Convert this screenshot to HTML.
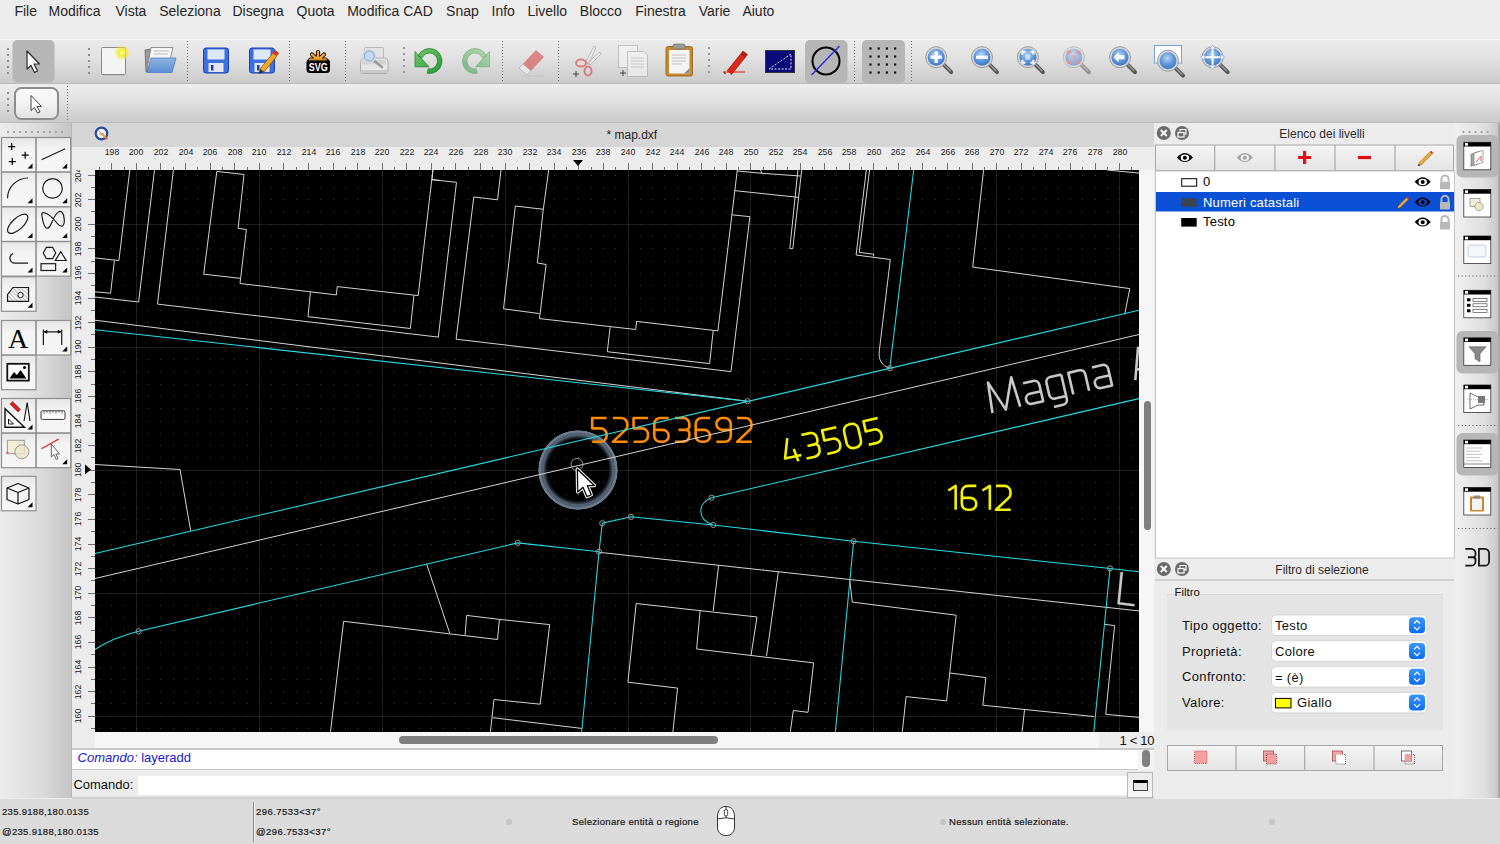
<!DOCTYPE html>
<html><head><meta charset="utf-8">
<style>
*{margin:0;padding:0;box-sizing:border-box}
html,body{width:1500px;height:844px;overflow:hidden;background:#ececec;font-family:"Liberation Sans",sans-serif;position:relative}
.a{position:absolute}
.t{position:absolute;white-space:nowrap;line-height:1}
</style></head><body>
<div class="a" style="left:0;top:0;width:1500px;height:39px;background:#ececec"></div>
<div class="t" style="left:14.4px;top:3.5px;font-size:14px;color:#262626;">File</div>
<div class="t" style="left:48.5px;top:3.5px;font-size:14px;color:#262626;">Modifica</div>
<div class="t" style="left:115.5px;top:3.5px;font-size:14px;color:#262626;">Vista</div>
<div class="t" style="left:159.2px;top:3.5px;font-size:14px;color:#262626;">Seleziona</div>
<div class="t" style="left:232.5px;top:3.5px;font-size:14px;color:#262626;">Disegna</div>
<div class="t" style="left:296.5px;top:3.5px;font-size:14px;color:#262626;">Quota</div>
<div class="t" style="left:347.2px;top:3.5px;font-size:14px;color:#262626;">Modifica CAD</div>
<div class="t" style="left:446.1px;top:3.5px;font-size:14px;color:#262626;">Snap</div>
<div class="t" style="left:491.5px;top:3.5px;font-size:14px;color:#262626;">Info</div>
<div class="t" style="left:527.4px;top:3.5px;font-size:14px;color:#262626;">Livello</div>
<div class="t" style="left:579.8px;top:3.5px;font-size:14px;color:#262626;">Blocco</div>
<div class="t" style="left:635.3px;top:3.5px;font-size:14px;color:#262626;">Finestra</div>
<div class="t" style="left:698.7px;top:3.5px;font-size:14px;color:#262626;">Varie</div>
<div class="t" style="left:742.4px;top:3.5px;font-size:14px;color:#262626;">Aiuto</div>
<div class="a" style="left:0;top:39px;width:1500px;height:45px;background:linear-gradient(#f4f4f4 0,#f4f4f4 1px,#ebebeb 1px,#e2e2e2 40%,#cbcbcb 97%,#b9b9b9 97%)"></div>
<div class="a" style="left:0;top:84px;width:1500px;height:39px;background:linear-gradient(#ededed,#e2e2e2 40%,#cacaca 97%,#bcbcbc 97%)"></div>
<svg class="a" style="left:0;top:0" width="1300" height="125">
<defs><radialGradient id="gblue" cx="45%" cy="35%" r="65%"><stop offset="0" stop-color="#b8d4f4"/><stop offset="0.6" stop-color="#5e96dc"/><stop offset="1" stop-color="#3f78c4"/></radialGradient><radialGradient id="gglow" cx="50%" cy="50%" r="50%"><stop offset="0" stop-color="#fffff0"/><stop offset="0.35" stop-color="#f4ee30"/><stop offset="1" stop-color="#f0e800" stop-opacity="0"/></radialGradient><linearGradient id="gfold" x1="0" y1="0" x2="0" y2="1"><stop offset="0" stop-color="#8fb4e2"/><stop offset="1" stop-color="#5a8fd2"/></linearGradient><linearGradient id="gbtn" x1="0" y1="0" x2="0" y2="1"><stop offset="0" stop-color="#fbfbfb"/><stop offset="0.5" stop-color="#f2f2f2"/><stop offset="1" stop-color="#e2e2e2"/></linearGradient></defs>
<rect x="7.0" y="48.0" width="2" height="2" fill="#8c8c8c"/><rect x="7.0" y="54.0" width="2" height="2" fill="#8c8c8c"/><rect x="7.0" y="60.0" width="2" height="2" fill="#8c8c8c"/><rect x="7.0" y="66.0" width="2" height="2" fill="#8c8c8c"/><rect x="7.0" y="72.0" width="2" height="2" fill="#8c8c8c"/>
<rect x="12.5" y="40" width="42" height="42.5" rx="5" fill="#b6b6b6"/>
<path d="M27 51 L27 69 L31 65.5 L34.5 72.5 L37.5 71 L34 64 L39.5 64 Z" fill="#fff" stroke="#2a2a2a" stroke-width="1.2" stroke-linejoin="round"/>
<rect x="88.0" y="48.0" width="2" height="2" fill="#8c8c8c"/><rect x="88.0" y="54.0" width="2" height="2" fill="#8c8c8c"/><rect x="88.0" y="60.0" width="2" height="2" fill="#8c8c8c"/><rect x="88.0" y="66.0" width="2" height="2" fill="#8c8c8c"/><rect x="88.0" y="72.0" width="2" height="2" fill="#8c8c8c"/>
<rect x="101.5" y="47.5" width="24" height="27" rx="1" fill="#f4f4f4" stroke="#8a8a8a" stroke-width="1"/>
<line x1="102" y1="75.5" x2="125" y2="75.5" stroke="#c0c0c0"/>
<circle cx="122" cy="52.6" r="8" fill="url(#gglow)"/>
<path d="M145 50 L151 49 L149 71 L146 72 Z" fill="#9a9a9a" stroke="#666" stroke-width="0.8"/>
<path d="M151 47.5 L173 47.5 L170 60 L147 70 Z" fill="#f6f6f6" stroke="#7a7a7a" stroke-width="0.8"/>
<path d="M154 51 H169 M153.5 54 H168" stroke="#bbb" stroke-width="1.2"/>
<path d="M151 58 L176 58 L172 72.5 L147 72.5 Z" fill="url(#gfold)" stroke="#4a7bbf" stroke-width="0.8"/>
<line x1="187.5" y1="41" x2="187.5" y2="81" stroke="#707070" stroke-width="1" stroke-dasharray="1 2"/>
<rect x="203.5" y="48.0" width="25" height="25" rx="2.5" fill="#3c6fe0" stroke="#1d3fb0" stroke-width="1"/><rect x="207.5" y="49.5" width="17" height="10" fill="#dfe8f8"/><rect x="208.5" y="63.0" width="15" height="9" fill="#e4e4ee"/><rect x="211.0" y="65.0" width="2.5" height="5.5" fill="#1d3fb0"/>
<rect x="249.5" y="48.0" width="25" height="25" rx="2.5" fill="#3c6fe0" stroke="#1d3fb0" stroke-width="1"/><rect x="253.5" y="49.5" width="17" height="10" fill="#dfe8f8"/><rect x="254.5" y="63.0" width="15" height="9" fill="#e4e4ee"/><rect x="257.0" y="65.0" width="2.5" height="5.5" fill="#1d3fb0"/>
<path d="M260 69 L273 53 L277 56 L264 72 Z" fill="#f5a623" stroke="#8a5a10" stroke-width="0.8"/><path d="M273 53 L275.5 50 L279 53 L277 56 Z" fill="#e03020"/><path d="M260 69 L258.5 74 L264 72 Z" fill="#333"/>
<line x1="289.5" y1="41" x2="289.5" y2="81" stroke="#707070" stroke-width="1" stroke-dasharray="1 2"/>
<path d="M318 60 V52 M318 60 L312 54.5 M318 60 L324 54.5 M318 60 L310.5 59.5 M318 60 L325.5 59.5" stroke="#000" stroke-width="4.2" stroke-linecap="round"/>
<path d="M318 60 V52 M318 60 L312 54.5 M318 60 L324 54.5 M318 60 L310.5 59.5 M318 60 L325.5 59.5" stroke="#f7a22e" stroke-width="2.4" stroke-linecap="round"/>
<rect x="306.5" y="59" width="23.5" height="14" rx="3.5" fill="#000"/><rect x="309" y="59.2" width="18" height="1.2" fill="#f7a22e"/>
<text x="318.2" y="71.2" text-anchor="middle" font-family="Liberation Sans" font-weight="bold" font-size="11.5" fill="#fff" textLength="19" lengthAdjust="spacingAndGlyphs">SVG</text>
<line x1="345.5" y1="41" x2="345.5" y2="81" stroke="#707070" stroke-width="1" stroke-dasharray="1 2"/>
<rect x="364.5" y="47.5" width="19" height="13" rx="1" fill="#e4e4e4" stroke="#b0b0b0" stroke-width="0.8"/>
<path d="M360.5 62 Q360.5 58 364 58 H384.5 Q388 58 388 62 V71 Q388 73.5 385 73.5 H363.5 Q360.5 73.5 360.5 71 Z" fill="#e6e6e6" stroke="#a0a0a0" stroke-width="0.8"/>
<rect x="362" y="60" width="24" height="4.5" rx="1" fill="#d2d2d2"/><rect x="361" y="70" width="26.5" height="3" fill="#c8c8c8"/>
<line x1="373" y1="60" x2="382" y2="67" stroke="#9a9a9a" stroke-width="2.6" stroke-linecap="round"/>
<circle cx="369.3" cy="56" r="6.3" fill="#c4d8f0" stroke="#d8d8d8" stroke-width="1.6"/><circle cx="369.3" cy="56" r="5" fill="none" stroke="#6a9ad8" stroke-width="0.8"/>
<rect x="403.0" y="47.0" width="2" height="2" fill="#999"/><rect x="403.0" y="53.0" width="2" height="2" fill="#999"/><rect x="403.0" y="59.0" width="2" height="2" fill="#999"/><rect x="403.0" y="65.0" width="2" height="2" fill="#999"/><rect x="403.0" y="71.0" width="2" height="2" fill="#999"/>
<defs><linearGradient id="gund" x1="0" y1="0" x2="1" y2="1"><stop offset="0" stop-color="#7cc870"/><stop offset="1" stop-color="#1e9a30"/></linearGradient></defs>
<path d="M418.17 55.72 A12.5 12.5 0 1 1 427.33 73.31 L428.11 68.88 A8 8 0 1 0 422.25 57.62 Z M415 51.5 L415 66.8 L429 66.8 Z" fill="url(#gund)" stroke="#1a7a28" stroke-width="0.7" stroke-linejoin="round"/>
<g opacity="0.5" transform="translate(904.5 0) scale(-1 1)"><path d="M418.17 55.72 A12.5 12.5 0 1 1 427.33 73.31 L428.11 68.88 A8 8 0 1 0 422.25 57.62 Z M415 51.5 L415 66.8 L429 66.8 Z" fill="url(#gund)" stroke="#1a7a28" stroke-width="0.7" stroke-linejoin="round"/></g>
<line x1="502.5" y1="41" x2="502.5" y2="81" stroke="#707070" stroke-width="1" stroke-dasharray="1 2"/>
<g opacity="0.6"><path d="M519 68 L536 50 L544 57 L527 75 Z" fill="#d84a4a"/><path d="M519 68 L523 64 L531 71 L527 75 Z" fill="#f2f2f2" stroke="#999" stroke-width="0.6"/><path d="M522 76 H544" stroke="#bbb" stroke-width="1"/></g>
<line x1="558.5" y1="41" x2="558.5" y2="81" stroke="#707070" stroke-width="1" stroke-dasharray="1 2"/>
<g opacity="0.65"><path d="M586 62 L594 46 L596 47 L589 64 Z M587 63 L600 52 L601 54 L590 65 Z" fill="#eee" stroke="#888" stroke-width="0.7"/><ellipse cx="581" cy="63" rx="5" ry="3.5" fill="none" stroke="#d84a4a" stroke-width="2"/><ellipse cx="588" cy="71" rx="3.5" ry="4.5" fill="none" stroke="#d84a4a" stroke-width="2"/></g>
<path d="M573 74 H579 M576 71 V77" stroke="#444" stroke-width="1"/>
<g opacity="0.6"><rect x="618.5" y="45.5" width="19" height="22" fill="#f6f6f6" stroke="#999" stroke-width="0.8"/><path d="M627.5 51.5 H644 L647.5 55 V76.5 H627.5 Z" fill="#f6f6f6" stroke="#999" stroke-width="0.8"/><path d="M631 58 H644 M631 61 H644 M631 64 H644 M631 67 H644" stroke="#bbb"/></g>
<path d="M620 73 H626 M623 70 V76" stroke="#444" stroke-width="1"/>
<rect x="666" y="46.5" width="26.5" height="29.5" rx="2" fill="#c48a2c" stroke="#8a5a18" stroke-width="0.8"/>
<rect x="669" y="50" width="20.5" height="23.5" fill="#f4f4f4"/>
<path d="M672 55 H686 M672 58 H686 M672 61 H686 M672 64 H682" stroke="#c0c0c0"/>
<rect x="673" y="44" width="12" height="5" rx="1.5" fill="#9a9a9a" stroke="#666" stroke-width="0.6"/>
<path d="M684 73.5 L689.5 68 V73.5 Z" fill="#888"/>
<rect x="708.0" y="47.0" width="2" height="2" fill="#999"/><rect x="708.0" y="53.0" width="2" height="2" fill="#999"/><rect x="708.0" y="59.0" width="2" height="2" fill="#999"/><rect x="708.0" y="65.0" width="2" height="2" fill="#999"/><rect x="708.0" y="71.0" width="2" height="2" fill="#999"/>
<path d="M727 71 L741 53.5 L745.5 57 L731.5 74.5 Z" fill="#e0281a" stroke="#8a1a10" stroke-width="0.7"/><path d="M741 53.5 L743 51 L747.5 54.5 L745.5 57 Z" fill="#c02010" stroke="#8a1a10" stroke-width="0.6"/><path d="M727 71 L724 73 L731.5 74.5 Z" fill="#f0d8b0"/><path d="M724 72.4 L725.5 73.8" stroke="#222" stroke-width="1.2"/><line x1="723" y1="72" x2="745" y2="72" stroke="#e01010" stroke-width="1"/>
<rect x="765.5" y="50.5" width="29" height="22" fill="#0a0a7a" stroke="#333" stroke-width="1"/>
<path d="M769 69 L791 54 V69 Z" fill="none" stroke="#e8e8ff" stroke-width="1" stroke-dasharray="2 1.5"/>
<rect x="805" y="40" width="42.5" height="43" rx="5" fill="#b6b6b6"/>
<circle cx="826" cy="61" r="13.5" fill="none" stroke="#000" stroke-width="2"/>
<line x1="811.5" y1="75" x2="839.5" y2="46" stroke="#2020f0" stroke-width="1.2"/>
<line x1="854.5" y1="41" x2="854.5" y2="81" stroke="#707070" stroke-width="1" stroke-dasharray="1 2"/>
<rect x="862" y="40" width="43" height="43" rx="5" fill="#b6b6b6"/>
<rect x="869.4" y="47.4" width="2.2" height="2.2" fill="#111"/><rect x="869.4" y="55.4" width="2.2" height="2.2" fill="#111"/><rect x="869.4" y="63.4" width="2.2" height="2.2" fill="#111"/><rect x="869.4" y="71.4" width="2.2" height="2.2" fill="#111"/><rect x="877.6" y="47.4" width="2.2" height="2.2" fill="#111"/><rect x="877.6" y="55.4" width="2.2" height="2.2" fill="#111"/><rect x="877.6" y="63.4" width="2.2" height="2.2" fill="#111"/><rect x="877.6" y="71.4" width="2.2" height="2.2" fill="#111"/><rect x="885.8" y="47.4" width="2.2" height="2.2" fill="#111"/><rect x="885.8" y="55.4" width="2.2" height="2.2" fill="#111"/><rect x="885.8" y="63.4" width="2.2" height="2.2" fill="#111"/><rect x="885.8" y="71.4" width="2.2" height="2.2" fill="#111"/><rect x="894.0" y="47.4" width="2.2" height="2.2" fill="#111"/><rect x="894.0" y="55.4" width="2.2" height="2.2" fill="#111"/><rect x="894.0" y="63.4" width="2.2" height="2.2" fill="#111"/><rect x="894.0" y="71.4" width="2.2" height="2.2" fill="#111"/>
<line x1="911.5" y1="41" x2="911.5" y2="81" stroke="#707070" stroke-width="1" stroke-dasharray="1 2"/>
<g><line x1="943.2" y1="64.2" x2="951.2" y2="72.2" stroke="#555" stroke-width="4" stroke-linecap="round"/><line x1="944.2" y1="64.7" x2="950.2" y2="70.7" stroke="#999" stroke-width="1.5" stroke-linecap="round"/><circle cx="936.2" cy="57.2" r="10.5" fill="#d8d8d8" stroke="#9a9a9a" stroke-width="1"/><circle cx="936.2" cy="57.2" r="8.5" fill="url(#gblue)"/><path d="M936.2 51.5 V63 M930.5 57.2 H942" stroke="#fff" stroke-width="3.2"/></g>
<g><line x1="989.0" y1="64.2" x2="997.0" y2="72.2" stroke="#555" stroke-width="4" stroke-linecap="round"/><line x1="990.0" y1="64.7" x2="996.0" y2="70.7" stroke="#999" stroke-width="1.5" stroke-linecap="round"/><circle cx="982.0" cy="57.2" r="10.5" fill="#d8d8d8" stroke="#9a9a9a" stroke-width="1"/><circle cx="982.0" cy="57.2" r="8.5" fill="url(#gblue)"/><path d="M976 57.2 H988" stroke="#fff" stroke-width="3.2"/></g>
<g><line x1="1034.9" y1="64.2" x2="1042.9" y2="72.2" stroke="#555" stroke-width="4" stroke-linecap="round"/><line x1="1035.9" y1="64.7" x2="1041.9" y2="70.7" stroke="#999" stroke-width="1.5" stroke-linecap="round"/><circle cx="1027.9" cy="57.2" r="10.5" fill="#d8d8d8" stroke="#9a9a9a" stroke-width="1"/><circle cx="1027.9" cy="57.2" r="8.5" fill="url(#gblue)"/><path d="M1022.4000000000001 54.7 v-3 h3 M1033.4 54.7 v-3 h-3 M1022.4000000000001 59.7 v3 h3 M1033.4 59.7 v3 h-3" stroke="#fff" stroke-width="2" fill="none"/><rect x="1025.4" y="54.7" width="5" height="5" fill="#fff" opacity="0.5"/></g>
<g opacity="0.55"><line x1="1080.8" y1="64.2" x2="1088.8" y2="72.2" stroke="#555" stroke-width="4" stroke-linecap="round"/><line x1="1081.8" y1="64.7" x2="1087.8" y2="70.7" stroke="#999" stroke-width="1.5" stroke-linecap="round"/><circle cx="1073.8" cy="57.2" r="10.5" fill="#d8d8d8" stroke="#9a9a9a" stroke-width="1"/><circle cx="1073.8" cy="57.2" r="8.5" fill="url(#gblue)"/><path d="M1068.3 54.7 v-3 h3 M1079.3 54.7 v-3 h-3 M1068.3 59.7 v3 h3 M1079.3 59.7 v3 h-3" stroke="#e85050" stroke-width="2" fill="none"/><rect x="1071.3" y="54.7" width="5" height="5" fill="#e85050" opacity="0.5"/></g>
<g><line x1="1127.0" y1="64.2" x2="1135.0" y2="72.2" stroke="#555" stroke-width="4" stroke-linecap="round"/><line x1="1128.0" y1="64.7" x2="1134.0" y2="70.7" stroke="#999" stroke-width="1.5" stroke-linecap="round"/><circle cx="1120.0" cy="57.2" r="10.5" fill="#d8d8d8" stroke="#9a9a9a" stroke-width="1"/><circle cx="1120.0" cy="57.2" r="8.5" fill="url(#gblue)"/><path d="M1113.5 57.2 l5 -5 v3 h6 v4 h-6 v3 Z" fill="#fff"/></g>
<rect x="1154.5" y="45.5" width="27" height="17.5" fill="#fff" stroke="#7aa0d8" stroke-width="1"/>
<g><line x1="1175.0" y1="67.7" x2="1183.0" y2="75.7" stroke="#555" stroke-width="4" stroke-linecap="round"/><line x1="1176.0" y1="68.2" x2="1182.0" y2="74.2" stroke="#999" stroke-width="1.5" stroke-linecap="round"/><circle cx="1168.0" cy="60.7" r="10.5" fill="#d8d8d8" stroke="#9a9a9a" stroke-width="1"/><circle cx="1168.0" cy="60.7" r="8.5" fill="url(#gblue)"/></g>
<g><line x1="1219.6" y1="64.2" x2="1227.6" y2="72.2" stroke="#555" stroke-width="4" stroke-linecap="round"/><line x1="1220.6" y1="64.7" x2="1226.6" y2="70.7" stroke="#999" stroke-width="1.5" stroke-linecap="round"/><circle cx="1212.6" cy="57.2" r="10.5" fill="#d8d8d8" stroke="#9a9a9a" stroke-width="1"/><circle cx="1212.6" cy="57.2" r="8.5" fill="url(#gblue)"/><path d="M1212.6 49.2 V65.2 M1204.6 57.2 H1220.6" stroke="#fff" stroke-width="2"/><path d="M1212.6 45.2 l-3 4 h6 Z M1212.6 69.2 l-3 -4 h6 Z M1200.6 57.2 l4 -3 v6 Z M1224.6 57.2 l-4 -3 v6 Z" fill="#fff" stroke="#6a9ae0" stroke-width="0.6"/></g>
<rect x="7.0" y="92.0" width="2" height="2" fill="#8c8c8c"/><rect x="7.0" y="98.0" width="2" height="2" fill="#8c8c8c"/><rect x="7.0" y="104.0" width="2" height="2" fill="#8c8c8c"/><rect x="7.0" y="110.0" width="2" height="2" fill="#8c8c8c"/>
<rect x="15" y="88" width="43" height="31" rx="6.5" fill="url(#gbtn)" stroke="#8c8c8c" stroke-width="2"/>
<path d="M31 95.5 L31 110.5 L34.5 107.5 L37.5 113 L40 112 L37 106.5 L41.5 106.5 Z" fill="#fff" stroke="#444" stroke-width="1" stroke-linejoin="round"/>
<line x1="67.5" y1="86" x2="67.5" y2="121" stroke="#707070" stroke-width="1" stroke-dasharray="1 2"/>
</svg>
<div class="a" style="left:0;top:123px;width:72px;height:675px;background:linear-gradient(90deg,#ececec,#dadada 60%,#c4c4c4);border-right:1px solid #b8b8b8"></div>
<div class="a" style="left:72px;top:123px;width:1082px;height:24px;background:#d5d5d5"></div>
<div class="t" style="left:606.5px;top:128.7px;font-size:12px;color:#1e1e1e;">* map.dxf</div>
<svg class="a" style="left:94px;top:126px" width="16" height="16"><circle cx="7.5" cy="7.5" r="5.8" fill="#eef0f4" stroke="#2a4a9a" stroke-width="2.2"/><path d="M5 5 L8 8 M5 8 H10" stroke="#c04040" stroke-width="0.6"/><path d="M7.5 7.5 L12 12" stroke="#e8a020" stroke-width="2"/><circle cx="12.5" cy="12.5" r="1.2" fill="#e06060"/></svg>
<div class="a" style="left:72px;top:147px;width:1082px;height:601px;background:#ececec"></div>
<div class="a" style="left:95px;top:732px;width:1004px;height:16px;background:#f6f6f6"></div>
<div class="a" style="left:1139px;top:170px;width:15px;height:562px;background:#f6f6f6"></div>
<div class="a" style="left:1154px;top:123px;width:301px;height:675px;background:#ececec"></div>
<div class="a" style="left:1455px;top:123px;width:45px;height:675px;background:linear-gradient(90deg,#f0f0f0,#dedede 70%,#c8c8c8);border-right:2px solid #a8a8a8"></div>
<div class="a" style="left:0;top:799px;width:1500px;height:45px;background:#dbdbdb"></div><svg width="1500" height="844" style="position:absolute;left:0;top:0">
<defs><clipPath id="cv"><rect x="95" y="170" width="1044" height="562"/></clipPath>
<radialGradient id="ring" gradientUnits="userSpaceOnUse" cx="578" cy="470" r="40"><stop offset="0.76" stop-color="#3c4a58" stop-opacity="0"/><stop offset="0.83" stop-color="#4a5868" stop-opacity="0.6"/><stop offset="0.87" stop-color="#5f6e7e" stop-opacity="0.9"/><stop offset="0.91" stop-color="#56657a" stop-opacity="0.9"/><stop offset="0.95" stop-color="#6e7e8e" stop-opacity="1"/><stop offset="0.985" stop-color="#6a7a8a" stop-opacity="1"/><stop offset="1" stop-color="#506070" stop-opacity="0"/></radialGradient>
</defs>
<g clip-path="url(#cv)">
<rect x="95" y="170" width="1044" height="562" fill="#000"/>
<path d="M136.5 170V732M259.5 170V732M382.5 170V732M505.5 170V732M628.5 170V732M750.5 170V732M873.5 170V732M996.5 170V732M1119.5 170V732M95 224.5H1139M95 347.5H1139M95 470.5H1139M95 593.5H1139M95 716.5H1139" stroke="#1d1d1d" stroke-width="1" fill="none"/>
<path d="M99 728h1v1h-1zM99 716h1v1h-1zM99 703h1v1h-1zM99 691h1v1h-1zM99 679h1v1h-1zM99 667h1v1h-1zM99 654h1v1h-1zM99 642h1v1h-1zM99 630h1v1h-1zM99 617h1v1h-1zM99 605h1v1h-1zM99 593h1v1h-1zM99 580h1v1h-1zM99 568h1v1h-1zM99 556h1v1h-1zM99 544h1v1h-1zM99 531h1v1h-1zM99 519h1v1h-1zM99 507h1v1h-1zM99 494h1v1h-1zM99 482h1v1h-1zM99 470h1v1h-1zM99 457h1v1h-1zM99 445h1v1h-1zM99 433h1v1h-1zM99 421h1v1h-1zM99 408h1v1h-1zM99 396h1v1h-1zM99 384h1v1h-1zM99 371h1v1h-1zM99 359h1v1h-1zM99 347h1v1h-1zM99 334h1v1h-1zM99 322h1v1h-1zM99 310h1v1h-1zM99 298h1v1h-1zM99 285h1v1h-1zM99 273h1v1h-1zM99 261h1v1h-1zM99 248h1v1h-1zM99 236h1v1h-1zM99 224h1v1h-1zM99 211h1v1h-1zM99 199h1v1h-1zM99 187h1v1h-1zM99 175h1v1h-1zM111 728h1v1h-1zM111 716h1v1h-1zM111 703h1v1h-1zM111 691h1v1h-1zM111 679h1v1h-1zM111 667h1v1h-1zM111 654h1v1h-1zM111 642h1v1h-1zM111 630h1v1h-1zM111 617h1v1h-1zM111 605h1v1h-1zM111 593h1v1h-1zM111 580h1v1h-1zM111 568h1v1h-1zM111 556h1v1h-1zM111 544h1v1h-1zM111 531h1v1h-1zM111 519h1v1h-1zM111 507h1v1h-1zM111 494h1v1h-1zM111 482h1v1h-1zM111 470h1v1h-1zM111 457h1v1h-1zM111 445h1v1h-1zM111 433h1v1h-1zM111 421h1v1h-1zM111 408h1v1h-1zM111 396h1v1h-1zM111 384h1v1h-1zM111 371h1v1h-1zM111 359h1v1h-1zM111 347h1v1h-1zM111 334h1v1h-1zM111 322h1v1h-1zM111 310h1v1h-1zM111 298h1v1h-1zM111 285h1v1h-1zM111 273h1v1h-1zM111 261h1v1h-1zM111 248h1v1h-1zM111 236h1v1h-1zM111 224h1v1h-1zM111 211h1v1h-1zM111 199h1v1h-1zM111 187h1v1h-1zM111 175h1v1h-1zM124 728h1v1h-1zM124 716h1v1h-1zM124 703h1v1h-1zM124 691h1v1h-1zM124 679h1v1h-1zM124 667h1v1h-1zM124 654h1v1h-1zM124 642h1v1h-1zM124 630h1v1h-1zM124 617h1v1h-1zM124 605h1v1h-1zM124 593h1v1h-1zM124 580h1v1h-1zM124 568h1v1h-1zM124 556h1v1h-1zM124 544h1v1h-1zM124 531h1v1h-1zM124 519h1v1h-1zM124 507h1v1h-1zM124 494h1v1h-1zM124 482h1v1h-1zM124 470h1v1h-1zM124 457h1v1h-1zM124 445h1v1h-1zM124 433h1v1h-1zM124 421h1v1h-1zM124 408h1v1h-1zM124 396h1v1h-1zM124 384h1v1h-1zM124 371h1v1h-1zM124 359h1v1h-1zM124 347h1v1h-1zM124 334h1v1h-1zM124 322h1v1h-1zM124 310h1v1h-1zM124 298h1v1h-1zM124 285h1v1h-1zM124 273h1v1h-1zM124 261h1v1h-1zM124 248h1v1h-1zM124 236h1v1h-1zM124 224h1v1h-1zM124 211h1v1h-1zM124 199h1v1h-1zM124 187h1v1h-1zM124 175h1v1h-1zM136 728h1v1h-1zM136 716h1v1h-1zM136 703h1v1h-1zM136 691h1v1h-1zM136 679h1v1h-1zM136 667h1v1h-1zM136 654h1v1h-1zM136 642h1v1h-1zM136 630h1v1h-1zM136 617h1v1h-1zM136 605h1v1h-1zM136 593h1v1h-1zM136 580h1v1h-1zM136 568h1v1h-1zM136 556h1v1h-1zM136 544h1v1h-1zM136 531h1v1h-1zM136 519h1v1h-1zM136 507h1v1h-1zM136 494h1v1h-1zM136 482h1v1h-1zM136 470h1v1h-1zM136 457h1v1h-1zM136 445h1v1h-1zM136 433h1v1h-1zM136 421h1v1h-1zM136 408h1v1h-1zM136 396h1v1h-1zM136 384h1v1h-1zM136 371h1v1h-1zM136 359h1v1h-1zM136 347h1v1h-1zM136 334h1v1h-1zM136 322h1v1h-1zM136 310h1v1h-1zM136 298h1v1h-1zM136 285h1v1h-1zM136 273h1v1h-1zM136 261h1v1h-1zM136 248h1v1h-1zM136 236h1v1h-1zM136 224h1v1h-1zM136 211h1v1h-1zM136 199h1v1h-1zM136 187h1v1h-1zM136 175h1v1h-1zM148 728h1v1h-1zM148 716h1v1h-1zM148 703h1v1h-1zM148 691h1v1h-1zM148 679h1v1h-1zM148 667h1v1h-1zM148 654h1v1h-1zM148 642h1v1h-1zM148 630h1v1h-1zM148 617h1v1h-1zM148 605h1v1h-1zM148 593h1v1h-1zM148 580h1v1h-1zM148 568h1v1h-1zM148 556h1v1h-1zM148 544h1v1h-1zM148 531h1v1h-1zM148 519h1v1h-1zM148 507h1v1h-1zM148 494h1v1h-1zM148 482h1v1h-1zM148 470h1v1h-1zM148 457h1v1h-1zM148 445h1v1h-1zM148 433h1v1h-1zM148 421h1v1h-1zM148 408h1v1h-1zM148 396h1v1h-1zM148 384h1v1h-1zM148 371h1v1h-1zM148 359h1v1h-1zM148 347h1v1h-1zM148 334h1v1h-1zM148 322h1v1h-1zM148 310h1v1h-1zM148 298h1v1h-1zM148 285h1v1h-1zM148 273h1v1h-1zM148 261h1v1h-1zM148 248h1v1h-1zM148 236h1v1h-1zM148 224h1v1h-1zM148 211h1v1h-1zM148 199h1v1h-1zM148 187h1v1h-1zM148 175h1v1h-1zM160 728h1v1h-1zM160 716h1v1h-1zM160 703h1v1h-1zM160 691h1v1h-1zM160 679h1v1h-1zM160 667h1v1h-1zM160 654h1v1h-1zM160 642h1v1h-1zM160 630h1v1h-1zM160 617h1v1h-1zM160 605h1v1h-1zM160 593h1v1h-1zM160 580h1v1h-1zM160 568h1v1h-1zM160 556h1v1h-1zM160 544h1v1h-1zM160 531h1v1h-1zM160 519h1v1h-1zM160 507h1v1h-1zM160 494h1v1h-1zM160 482h1v1h-1zM160 470h1v1h-1zM160 457h1v1h-1zM160 445h1v1h-1zM160 433h1v1h-1zM160 421h1v1h-1zM160 408h1v1h-1zM160 396h1v1h-1zM160 384h1v1h-1zM160 371h1v1h-1zM160 359h1v1h-1zM160 347h1v1h-1zM160 334h1v1h-1zM160 322h1v1h-1zM160 310h1v1h-1zM160 298h1v1h-1zM160 285h1v1h-1zM160 273h1v1h-1zM160 261h1v1h-1zM160 248h1v1h-1zM160 236h1v1h-1zM160 224h1v1h-1zM160 211h1v1h-1zM160 199h1v1h-1zM160 187h1v1h-1zM160 175h1v1h-1zM173 728h1v1h-1zM173 716h1v1h-1zM173 703h1v1h-1zM173 691h1v1h-1zM173 679h1v1h-1zM173 667h1v1h-1zM173 654h1v1h-1zM173 642h1v1h-1zM173 630h1v1h-1zM173 617h1v1h-1zM173 605h1v1h-1zM173 593h1v1h-1zM173 580h1v1h-1zM173 568h1v1h-1zM173 556h1v1h-1zM173 544h1v1h-1zM173 531h1v1h-1zM173 519h1v1h-1zM173 507h1v1h-1zM173 494h1v1h-1zM173 482h1v1h-1zM173 470h1v1h-1zM173 457h1v1h-1zM173 445h1v1h-1zM173 433h1v1h-1zM173 421h1v1h-1zM173 408h1v1h-1zM173 396h1v1h-1zM173 384h1v1h-1zM173 371h1v1h-1zM173 359h1v1h-1zM173 347h1v1h-1zM173 334h1v1h-1zM173 322h1v1h-1zM173 310h1v1h-1zM173 298h1v1h-1zM173 285h1v1h-1zM173 273h1v1h-1zM173 261h1v1h-1zM173 248h1v1h-1zM173 236h1v1h-1zM173 224h1v1h-1zM173 211h1v1h-1zM173 199h1v1h-1zM173 187h1v1h-1zM173 175h1v1h-1zM185 728h1v1h-1zM185 716h1v1h-1zM185 703h1v1h-1zM185 691h1v1h-1zM185 679h1v1h-1zM185 667h1v1h-1zM185 654h1v1h-1zM185 642h1v1h-1zM185 630h1v1h-1zM185 617h1v1h-1zM185 605h1v1h-1zM185 593h1v1h-1zM185 580h1v1h-1zM185 568h1v1h-1zM185 556h1v1h-1zM185 544h1v1h-1zM185 531h1v1h-1zM185 519h1v1h-1zM185 507h1v1h-1zM185 494h1v1h-1zM185 482h1v1h-1zM185 470h1v1h-1zM185 457h1v1h-1zM185 445h1v1h-1zM185 433h1v1h-1zM185 421h1v1h-1zM185 408h1v1h-1zM185 396h1v1h-1zM185 384h1v1h-1zM185 371h1v1h-1zM185 359h1v1h-1zM185 347h1v1h-1zM185 334h1v1h-1zM185 322h1v1h-1zM185 310h1v1h-1zM185 298h1v1h-1zM185 285h1v1h-1zM185 273h1v1h-1zM185 261h1v1h-1zM185 248h1v1h-1zM185 236h1v1h-1zM185 224h1v1h-1zM185 211h1v1h-1zM185 199h1v1h-1zM185 187h1v1h-1zM185 175h1v1h-1zM197 728h1v1h-1zM197 716h1v1h-1zM197 703h1v1h-1zM197 691h1v1h-1zM197 679h1v1h-1zM197 667h1v1h-1zM197 654h1v1h-1zM197 642h1v1h-1zM197 630h1v1h-1zM197 617h1v1h-1zM197 605h1v1h-1zM197 593h1v1h-1zM197 580h1v1h-1zM197 568h1v1h-1zM197 556h1v1h-1zM197 544h1v1h-1zM197 531h1v1h-1zM197 519h1v1h-1zM197 507h1v1h-1zM197 494h1v1h-1zM197 482h1v1h-1zM197 470h1v1h-1zM197 457h1v1h-1zM197 445h1v1h-1zM197 433h1v1h-1zM197 421h1v1h-1zM197 408h1v1h-1zM197 396h1v1h-1zM197 384h1v1h-1zM197 371h1v1h-1zM197 359h1v1h-1zM197 347h1v1h-1zM197 334h1v1h-1zM197 322h1v1h-1zM197 310h1v1h-1zM197 298h1v1h-1zM197 285h1v1h-1zM197 273h1v1h-1zM197 261h1v1h-1zM197 248h1v1h-1zM197 236h1v1h-1zM197 224h1v1h-1zM197 211h1v1h-1zM197 199h1v1h-1zM197 187h1v1h-1zM197 175h1v1h-1zM210 728h1v1h-1zM210 716h1v1h-1zM210 703h1v1h-1zM210 691h1v1h-1zM210 679h1v1h-1zM210 667h1v1h-1zM210 654h1v1h-1zM210 642h1v1h-1zM210 630h1v1h-1zM210 617h1v1h-1zM210 605h1v1h-1zM210 593h1v1h-1zM210 580h1v1h-1zM210 568h1v1h-1zM210 556h1v1h-1zM210 544h1v1h-1zM210 531h1v1h-1zM210 519h1v1h-1zM210 507h1v1h-1zM210 494h1v1h-1zM210 482h1v1h-1zM210 470h1v1h-1zM210 457h1v1h-1zM210 445h1v1h-1zM210 433h1v1h-1zM210 421h1v1h-1zM210 408h1v1h-1zM210 396h1v1h-1zM210 384h1v1h-1zM210 371h1v1h-1zM210 359h1v1h-1zM210 347h1v1h-1zM210 334h1v1h-1zM210 322h1v1h-1zM210 310h1v1h-1zM210 298h1v1h-1zM210 285h1v1h-1zM210 273h1v1h-1zM210 261h1v1h-1zM210 248h1v1h-1zM210 236h1v1h-1zM210 224h1v1h-1zM210 211h1v1h-1zM210 199h1v1h-1zM210 187h1v1h-1zM210 175h1v1h-1zM222 728h1v1h-1zM222 716h1v1h-1zM222 703h1v1h-1zM222 691h1v1h-1zM222 679h1v1h-1zM222 667h1v1h-1zM222 654h1v1h-1zM222 642h1v1h-1zM222 630h1v1h-1zM222 617h1v1h-1zM222 605h1v1h-1zM222 593h1v1h-1zM222 580h1v1h-1zM222 568h1v1h-1zM222 556h1v1h-1zM222 544h1v1h-1zM222 531h1v1h-1zM222 519h1v1h-1zM222 507h1v1h-1zM222 494h1v1h-1zM222 482h1v1h-1zM222 470h1v1h-1zM222 457h1v1h-1zM222 445h1v1h-1zM222 433h1v1h-1zM222 421h1v1h-1zM222 408h1v1h-1zM222 396h1v1h-1zM222 384h1v1h-1zM222 371h1v1h-1zM222 359h1v1h-1zM222 347h1v1h-1zM222 334h1v1h-1zM222 322h1v1h-1zM222 310h1v1h-1zM222 298h1v1h-1zM222 285h1v1h-1zM222 273h1v1h-1zM222 261h1v1h-1zM222 248h1v1h-1zM222 236h1v1h-1zM222 224h1v1h-1zM222 211h1v1h-1zM222 199h1v1h-1zM222 187h1v1h-1zM222 175h1v1h-1zM234 728h1v1h-1zM234 716h1v1h-1zM234 703h1v1h-1zM234 691h1v1h-1zM234 679h1v1h-1zM234 667h1v1h-1zM234 654h1v1h-1zM234 642h1v1h-1zM234 630h1v1h-1zM234 617h1v1h-1zM234 605h1v1h-1zM234 593h1v1h-1zM234 580h1v1h-1zM234 568h1v1h-1zM234 556h1v1h-1zM234 544h1v1h-1zM234 531h1v1h-1zM234 519h1v1h-1zM234 507h1v1h-1zM234 494h1v1h-1zM234 482h1v1h-1zM234 470h1v1h-1zM234 457h1v1h-1zM234 445h1v1h-1zM234 433h1v1h-1zM234 421h1v1h-1zM234 408h1v1h-1zM234 396h1v1h-1zM234 384h1v1h-1zM234 371h1v1h-1zM234 359h1v1h-1zM234 347h1v1h-1zM234 334h1v1h-1zM234 322h1v1h-1zM234 310h1v1h-1zM234 298h1v1h-1zM234 285h1v1h-1zM234 273h1v1h-1zM234 261h1v1h-1zM234 248h1v1h-1zM234 236h1v1h-1zM234 224h1v1h-1zM234 211h1v1h-1zM234 199h1v1h-1zM234 187h1v1h-1zM234 175h1v1h-1zM247 728h1v1h-1zM247 716h1v1h-1zM247 703h1v1h-1zM247 691h1v1h-1zM247 679h1v1h-1zM247 667h1v1h-1zM247 654h1v1h-1zM247 642h1v1h-1zM247 630h1v1h-1zM247 617h1v1h-1zM247 605h1v1h-1zM247 593h1v1h-1zM247 580h1v1h-1zM247 568h1v1h-1zM247 556h1v1h-1zM247 544h1v1h-1zM247 531h1v1h-1zM247 519h1v1h-1zM247 507h1v1h-1zM247 494h1v1h-1zM247 482h1v1h-1zM247 470h1v1h-1zM247 457h1v1h-1zM247 445h1v1h-1zM247 433h1v1h-1zM247 421h1v1h-1zM247 408h1v1h-1zM247 396h1v1h-1zM247 384h1v1h-1zM247 371h1v1h-1zM247 359h1v1h-1zM247 347h1v1h-1zM247 334h1v1h-1zM247 322h1v1h-1zM247 310h1v1h-1zM247 298h1v1h-1zM247 285h1v1h-1zM247 273h1v1h-1zM247 261h1v1h-1zM247 248h1v1h-1zM247 236h1v1h-1zM247 224h1v1h-1zM247 211h1v1h-1zM247 199h1v1h-1zM247 187h1v1h-1zM247 175h1v1h-1zM259 728h1v1h-1zM259 716h1v1h-1zM259 703h1v1h-1zM259 691h1v1h-1zM259 679h1v1h-1zM259 667h1v1h-1zM259 654h1v1h-1zM259 642h1v1h-1zM259 630h1v1h-1zM259 617h1v1h-1zM259 605h1v1h-1zM259 593h1v1h-1zM259 580h1v1h-1zM259 568h1v1h-1zM259 556h1v1h-1zM259 544h1v1h-1zM259 531h1v1h-1zM259 519h1v1h-1zM259 507h1v1h-1zM259 494h1v1h-1zM259 482h1v1h-1zM259 470h1v1h-1zM259 457h1v1h-1zM259 445h1v1h-1zM259 433h1v1h-1zM259 421h1v1h-1zM259 408h1v1h-1zM259 396h1v1h-1zM259 384h1v1h-1zM259 371h1v1h-1zM259 359h1v1h-1zM259 347h1v1h-1zM259 334h1v1h-1zM259 322h1v1h-1zM259 310h1v1h-1zM259 298h1v1h-1zM259 285h1v1h-1zM259 273h1v1h-1zM259 261h1v1h-1zM259 248h1v1h-1zM259 236h1v1h-1zM259 224h1v1h-1zM259 211h1v1h-1zM259 199h1v1h-1zM259 187h1v1h-1zM259 175h1v1h-1zM271 728h1v1h-1zM271 716h1v1h-1zM271 703h1v1h-1zM271 691h1v1h-1zM271 679h1v1h-1zM271 667h1v1h-1zM271 654h1v1h-1zM271 642h1v1h-1zM271 630h1v1h-1zM271 617h1v1h-1zM271 605h1v1h-1zM271 593h1v1h-1zM271 580h1v1h-1zM271 568h1v1h-1zM271 556h1v1h-1zM271 544h1v1h-1zM271 531h1v1h-1zM271 519h1v1h-1zM271 507h1v1h-1zM271 494h1v1h-1zM271 482h1v1h-1zM271 470h1v1h-1zM271 457h1v1h-1zM271 445h1v1h-1zM271 433h1v1h-1zM271 421h1v1h-1zM271 408h1v1h-1zM271 396h1v1h-1zM271 384h1v1h-1zM271 371h1v1h-1zM271 359h1v1h-1zM271 347h1v1h-1zM271 334h1v1h-1zM271 322h1v1h-1zM271 310h1v1h-1zM271 298h1v1h-1zM271 285h1v1h-1zM271 273h1v1h-1zM271 261h1v1h-1zM271 248h1v1h-1zM271 236h1v1h-1zM271 224h1v1h-1zM271 211h1v1h-1zM271 199h1v1h-1zM271 187h1v1h-1zM271 175h1v1h-1zM283 728h1v1h-1zM283 716h1v1h-1zM283 703h1v1h-1zM283 691h1v1h-1zM283 679h1v1h-1zM283 667h1v1h-1zM283 654h1v1h-1zM283 642h1v1h-1zM283 630h1v1h-1zM283 617h1v1h-1zM283 605h1v1h-1zM283 593h1v1h-1zM283 580h1v1h-1zM283 568h1v1h-1zM283 556h1v1h-1zM283 544h1v1h-1zM283 531h1v1h-1zM283 519h1v1h-1zM283 507h1v1h-1zM283 494h1v1h-1zM283 482h1v1h-1zM283 470h1v1h-1zM283 457h1v1h-1zM283 445h1v1h-1zM283 433h1v1h-1zM283 421h1v1h-1zM283 408h1v1h-1zM283 396h1v1h-1zM283 384h1v1h-1zM283 371h1v1h-1zM283 359h1v1h-1zM283 347h1v1h-1zM283 334h1v1h-1zM283 322h1v1h-1zM283 310h1v1h-1zM283 298h1v1h-1zM283 285h1v1h-1zM283 273h1v1h-1zM283 261h1v1h-1zM283 248h1v1h-1zM283 236h1v1h-1zM283 224h1v1h-1zM283 211h1v1h-1zM283 199h1v1h-1zM283 187h1v1h-1zM283 175h1v1h-1zM296 728h1v1h-1zM296 716h1v1h-1zM296 703h1v1h-1zM296 691h1v1h-1zM296 679h1v1h-1zM296 667h1v1h-1zM296 654h1v1h-1zM296 642h1v1h-1zM296 630h1v1h-1zM296 617h1v1h-1zM296 605h1v1h-1zM296 593h1v1h-1zM296 580h1v1h-1zM296 568h1v1h-1zM296 556h1v1h-1zM296 544h1v1h-1zM296 531h1v1h-1zM296 519h1v1h-1zM296 507h1v1h-1zM296 494h1v1h-1zM296 482h1v1h-1zM296 470h1v1h-1zM296 457h1v1h-1zM296 445h1v1h-1zM296 433h1v1h-1zM296 421h1v1h-1zM296 408h1v1h-1zM296 396h1v1h-1zM296 384h1v1h-1zM296 371h1v1h-1zM296 359h1v1h-1zM296 347h1v1h-1zM296 334h1v1h-1zM296 322h1v1h-1zM296 310h1v1h-1zM296 298h1v1h-1zM296 285h1v1h-1zM296 273h1v1h-1zM296 261h1v1h-1zM296 248h1v1h-1zM296 236h1v1h-1zM296 224h1v1h-1zM296 211h1v1h-1zM296 199h1v1h-1zM296 187h1v1h-1zM296 175h1v1h-1zM308 728h1v1h-1zM308 716h1v1h-1zM308 703h1v1h-1zM308 691h1v1h-1zM308 679h1v1h-1zM308 667h1v1h-1zM308 654h1v1h-1zM308 642h1v1h-1zM308 630h1v1h-1zM308 617h1v1h-1zM308 605h1v1h-1zM308 593h1v1h-1zM308 580h1v1h-1zM308 568h1v1h-1zM308 556h1v1h-1zM308 544h1v1h-1zM308 531h1v1h-1zM308 519h1v1h-1zM308 507h1v1h-1zM308 494h1v1h-1zM308 482h1v1h-1zM308 470h1v1h-1zM308 457h1v1h-1zM308 445h1v1h-1zM308 433h1v1h-1zM308 421h1v1h-1zM308 408h1v1h-1zM308 396h1v1h-1zM308 384h1v1h-1zM308 371h1v1h-1zM308 359h1v1h-1zM308 347h1v1h-1zM308 334h1v1h-1zM308 322h1v1h-1zM308 310h1v1h-1zM308 298h1v1h-1zM308 285h1v1h-1zM308 273h1v1h-1zM308 261h1v1h-1zM308 248h1v1h-1zM308 236h1v1h-1zM308 224h1v1h-1zM308 211h1v1h-1zM308 199h1v1h-1zM308 187h1v1h-1zM308 175h1v1h-1zM320 728h1v1h-1zM320 716h1v1h-1zM320 703h1v1h-1zM320 691h1v1h-1zM320 679h1v1h-1zM320 667h1v1h-1zM320 654h1v1h-1zM320 642h1v1h-1zM320 630h1v1h-1zM320 617h1v1h-1zM320 605h1v1h-1zM320 593h1v1h-1zM320 580h1v1h-1zM320 568h1v1h-1zM320 556h1v1h-1zM320 544h1v1h-1zM320 531h1v1h-1zM320 519h1v1h-1zM320 507h1v1h-1zM320 494h1v1h-1zM320 482h1v1h-1zM320 470h1v1h-1zM320 457h1v1h-1zM320 445h1v1h-1zM320 433h1v1h-1zM320 421h1v1h-1zM320 408h1v1h-1zM320 396h1v1h-1zM320 384h1v1h-1zM320 371h1v1h-1zM320 359h1v1h-1zM320 347h1v1h-1zM320 334h1v1h-1zM320 322h1v1h-1zM320 310h1v1h-1zM320 298h1v1h-1zM320 285h1v1h-1zM320 273h1v1h-1zM320 261h1v1h-1zM320 248h1v1h-1zM320 236h1v1h-1zM320 224h1v1h-1zM320 211h1v1h-1zM320 199h1v1h-1zM320 187h1v1h-1zM320 175h1v1h-1zM333 728h1v1h-1zM333 716h1v1h-1zM333 703h1v1h-1zM333 691h1v1h-1zM333 679h1v1h-1zM333 667h1v1h-1zM333 654h1v1h-1zM333 642h1v1h-1zM333 630h1v1h-1zM333 617h1v1h-1zM333 605h1v1h-1zM333 593h1v1h-1zM333 580h1v1h-1zM333 568h1v1h-1zM333 556h1v1h-1zM333 544h1v1h-1zM333 531h1v1h-1zM333 519h1v1h-1zM333 507h1v1h-1zM333 494h1v1h-1zM333 482h1v1h-1zM333 470h1v1h-1zM333 457h1v1h-1zM333 445h1v1h-1zM333 433h1v1h-1zM333 421h1v1h-1zM333 408h1v1h-1zM333 396h1v1h-1zM333 384h1v1h-1zM333 371h1v1h-1zM333 359h1v1h-1zM333 347h1v1h-1zM333 334h1v1h-1zM333 322h1v1h-1zM333 310h1v1h-1zM333 298h1v1h-1zM333 285h1v1h-1zM333 273h1v1h-1zM333 261h1v1h-1zM333 248h1v1h-1zM333 236h1v1h-1zM333 224h1v1h-1zM333 211h1v1h-1zM333 199h1v1h-1zM333 187h1v1h-1zM333 175h1v1h-1zM345 728h1v1h-1zM345 716h1v1h-1zM345 703h1v1h-1zM345 691h1v1h-1zM345 679h1v1h-1zM345 667h1v1h-1zM345 654h1v1h-1zM345 642h1v1h-1zM345 630h1v1h-1zM345 617h1v1h-1zM345 605h1v1h-1zM345 593h1v1h-1zM345 580h1v1h-1zM345 568h1v1h-1zM345 556h1v1h-1zM345 544h1v1h-1zM345 531h1v1h-1zM345 519h1v1h-1zM345 507h1v1h-1zM345 494h1v1h-1zM345 482h1v1h-1zM345 470h1v1h-1zM345 457h1v1h-1zM345 445h1v1h-1zM345 433h1v1h-1zM345 421h1v1h-1zM345 408h1v1h-1zM345 396h1v1h-1zM345 384h1v1h-1zM345 371h1v1h-1zM345 359h1v1h-1zM345 347h1v1h-1zM345 334h1v1h-1zM345 322h1v1h-1zM345 310h1v1h-1zM345 298h1v1h-1zM345 285h1v1h-1zM345 273h1v1h-1zM345 261h1v1h-1zM345 248h1v1h-1zM345 236h1v1h-1zM345 224h1v1h-1zM345 211h1v1h-1zM345 199h1v1h-1zM345 187h1v1h-1zM345 175h1v1h-1zM357 728h1v1h-1zM357 716h1v1h-1zM357 703h1v1h-1zM357 691h1v1h-1zM357 679h1v1h-1zM357 667h1v1h-1zM357 654h1v1h-1zM357 642h1v1h-1zM357 630h1v1h-1zM357 617h1v1h-1zM357 605h1v1h-1zM357 593h1v1h-1zM357 580h1v1h-1zM357 568h1v1h-1zM357 556h1v1h-1zM357 544h1v1h-1zM357 531h1v1h-1zM357 519h1v1h-1zM357 507h1v1h-1zM357 494h1v1h-1zM357 482h1v1h-1zM357 470h1v1h-1zM357 457h1v1h-1zM357 445h1v1h-1zM357 433h1v1h-1zM357 421h1v1h-1zM357 408h1v1h-1zM357 396h1v1h-1zM357 384h1v1h-1zM357 371h1v1h-1zM357 359h1v1h-1zM357 347h1v1h-1zM357 334h1v1h-1zM357 322h1v1h-1zM357 310h1v1h-1zM357 298h1v1h-1zM357 285h1v1h-1zM357 273h1v1h-1zM357 261h1v1h-1zM357 248h1v1h-1zM357 236h1v1h-1zM357 224h1v1h-1zM357 211h1v1h-1zM357 199h1v1h-1zM357 187h1v1h-1zM357 175h1v1h-1zM369 728h1v1h-1zM369 716h1v1h-1zM369 703h1v1h-1zM369 691h1v1h-1zM369 679h1v1h-1zM369 667h1v1h-1zM369 654h1v1h-1zM369 642h1v1h-1zM369 630h1v1h-1zM369 617h1v1h-1zM369 605h1v1h-1zM369 593h1v1h-1zM369 580h1v1h-1zM369 568h1v1h-1zM369 556h1v1h-1zM369 544h1v1h-1zM369 531h1v1h-1zM369 519h1v1h-1zM369 507h1v1h-1zM369 494h1v1h-1zM369 482h1v1h-1zM369 470h1v1h-1zM369 457h1v1h-1zM369 445h1v1h-1zM369 433h1v1h-1zM369 421h1v1h-1zM369 408h1v1h-1zM369 396h1v1h-1zM369 384h1v1h-1zM369 371h1v1h-1zM369 359h1v1h-1zM369 347h1v1h-1zM369 334h1v1h-1zM369 322h1v1h-1zM369 310h1v1h-1zM369 298h1v1h-1zM369 285h1v1h-1zM369 273h1v1h-1zM369 261h1v1h-1zM369 248h1v1h-1zM369 236h1v1h-1zM369 224h1v1h-1zM369 211h1v1h-1zM369 199h1v1h-1zM369 187h1v1h-1zM369 175h1v1h-1zM382 728h1v1h-1zM382 716h1v1h-1zM382 703h1v1h-1zM382 691h1v1h-1zM382 679h1v1h-1zM382 667h1v1h-1zM382 654h1v1h-1zM382 642h1v1h-1zM382 630h1v1h-1zM382 617h1v1h-1zM382 605h1v1h-1zM382 593h1v1h-1zM382 580h1v1h-1zM382 568h1v1h-1zM382 556h1v1h-1zM382 544h1v1h-1zM382 531h1v1h-1zM382 519h1v1h-1zM382 507h1v1h-1zM382 494h1v1h-1zM382 482h1v1h-1zM382 470h1v1h-1zM382 457h1v1h-1zM382 445h1v1h-1zM382 433h1v1h-1zM382 421h1v1h-1zM382 408h1v1h-1zM382 396h1v1h-1zM382 384h1v1h-1zM382 371h1v1h-1zM382 359h1v1h-1zM382 347h1v1h-1zM382 334h1v1h-1zM382 322h1v1h-1zM382 310h1v1h-1zM382 298h1v1h-1zM382 285h1v1h-1zM382 273h1v1h-1zM382 261h1v1h-1zM382 248h1v1h-1zM382 236h1v1h-1zM382 224h1v1h-1zM382 211h1v1h-1zM382 199h1v1h-1zM382 187h1v1h-1zM382 175h1v1h-1zM394 728h1v1h-1zM394 716h1v1h-1zM394 703h1v1h-1zM394 691h1v1h-1zM394 679h1v1h-1zM394 667h1v1h-1zM394 654h1v1h-1zM394 642h1v1h-1zM394 630h1v1h-1zM394 617h1v1h-1zM394 605h1v1h-1zM394 593h1v1h-1zM394 580h1v1h-1zM394 568h1v1h-1zM394 556h1v1h-1zM394 544h1v1h-1zM394 531h1v1h-1zM394 519h1v1h-1zM394 507h1v1h-1zM394 494h1v1h-1zM394 482h1v1h-1zM394 470h1v1h-1zM394 457h1v1h-1zM394 445h1v1h-1zM394 433h1v1h-1zM394 421h1v1h-1zM394 408h1v1h-1zM394 396h1v1h-1zM394 384h1v1h-1zM394 371h1v1h-1zM394 359h1v1h-1zM394 347h1v1h-1zM394 334h1v1h-1zM394 322h1v1h-1zM394 310h1v1h-1zM394 298h1v1h-1zM394 285h1v1h-1zM394 273h1v1h-1zM394 261h1v1h-1zM394 248h1v1h-1zM394 236h1v1h-1zM394 224h1v1h-1zM394 211h1v1h-1zM394 199h1v1h-1zM394 187h1v1h-1zM394 175h1v1h-1zM406 728h1v1h-1zM406 716h1v1h-1zM406 703h1v1h-1zM406 691h1v1h-1zM406 679h1v1h-1zM406 667h1v1h-1zM406 654h1v1h-1zM406 642h1v1h-1zM406 630h1v1h-1zM406 617h1v1h-1zM406 605h1v1h-1zM406 593h1v1h-1zM406 580h1v1h-1zM406 568h1v1h-1zM406 556h1v1h-1zM406 544h1v1h-1zM406 531h1v1h-1zM406 519h1v1h-1zM406 507h1v1h-1zM406 494h1v1h-1zM406 482h1v1h-1zM406 470h1v1h-1zM406 457h1v1h-1zM406 445h1v1h-1zM406 433h1v1h-1zM406 421h1v1h-1zM406 408h1v1h-1zM406 396h1v1h-1zM406 384h1v1h-1zM406 371h1v1h-1zM406 359h1v1h-1zM406 347h1v1h-1zM406 334h1v1h-1zM406 322h1v1h-1zM406 310h1v1h-1zM406 298h1v1h-1zM406 285h1v1h-1zM406 273h1v1h-1zM406 261h1v1h-1zM406 248h1v1h-1zM406 236h1v1h-1zM406 224h1v1h-1zM406 211h1v1h-1zM406 199h1v1h-1zM406 187h1v1h-1zM406 175h1v1h-1zM419 728h1v1h-1zM419 716h1v1h-1zM419 703h1v1h-1zM419 691h1v1h-1zM419 679h1v1h-1zM419 667h1v1h-1zM419 654h1v1h-1zM419 642h1v1h-1zM419 630h1v1h-1zM419 617h1v1h-1zM419 605h1v1h-1zM419 593h1v1h-1zM419 580h1v1h-1zM419 568h1v1h-1zM419 556h1v1h-1zM419 544h1v1h-1zM419 531h1v1h-1zM419 519h1v1h-1zM419 507h1v1h-1zM419 494h1v1h-1zM419 482h1v1h-1zM419 470h1v1h-1zM419 457h1v1h-1zM419 445h1v1h-1zM419 433h1v1h-1zM419 421h1v1h-1zM419 408h1v1h-1zM419 396h1v1h-1zM419 384h1v1h-1zM419 371h1v1h-1zM419 359h1v1h-1zM419 347h1v1h-1zM419 334h1v1h-1zM419 322h1v1h-1zM419 310h1v1h-1zM419 298h1v1h-1zM419 285h1v1h-1zM419 273h1v1h-1zM419 261h1v1h-1zM419 248h1v1h-1zM419 236h1v1h-1zM419 224h1v1h-1zM419 211h1v1h-1zM419 199h1v1h-1zM419 187h1v1h-1zM419 175h1v1h-1zM431 728h1v1h-1zM431 716h1v1h-1zM431 703h1v1h-1zM431 691h1v1h-1zM431 679h1v1h-1zM431 667h1v1h-1zM431 654h1v1h-1zM431 642h1v1h-1zM431 630h1v1h-1zM431 617h1v1h-1zM431 605h1v1h-1zM431 593h1v1h-1zM431 580h1v1h-1zM431 568h1v1h-1zM431 556h1v1h-1zM431 544h1v1h-1zM431 531h1v1h-1zM431 519h1v1h-1zM431 507h1v1h-1zM431 494h1v1h-1zM431 482h1v1h-1zM431 470h1v1h-1zM431 457h1v1h-1zM431 445h1v1h-1zM431 433h1v1h-1zM431 421h1v1h-1zM431 408h1v1h-1zM431 396h1v1h-1zM431 384h1v1h-1zM431 371h1v1h-1zM431 359h1v1h-1zM431 347h1v1h-1zM431 334h1v1h-1zM431 322h1v1h-1zM431 310h1v1h-1zM431 298h1v1h-1zM431 285h1v1h-1zM431 273h1v1h-1zM431 261h1v1h-1zM431 248h1v1h-1zM431 236h1v1h-1zM431 224h1v1h-1zM431 211h1v1h-1zM431 199h1v1h-1zM431 187h1v1h-1zM431 175h1v1h-1zM443 728h1v1h-1zM443 716h1v1h-1zM443 703h1v1h-1zM443 691h1v1h-1zM443 679h1v1h-1zM443 667h1v1h-1zM443 654h1v1h-1zM443 642h1v1h-1zM443 630h1v1h-1zM443 617h1v1h-1zM443 605h1v1h-1zM443 593h1v1h-1zM443 580h1v1h-1zM443 568h1v1h-1zM443 556h1v1h-1zM443 544h1v1h-1zM443 531h1v1h-1zM443 519h1v1h-1zM443 507h1v1h-1zM443 494h1v1h-1zM443 482h1v1h-1zM443 470h1v1h-1zM443 457h1v1h-1zM443 445h1v1h-1zM443 433h1v1h-1zM443 421h1v1h-1zM443 408h1v1h-1zM443 396h1v1h-1zM443 384h1v1h-1zM443 371h1v1h-1zM443 359h1v1h-1zM443 347h1v1h-1zM443 334h1v1h-1zM443 322h1v1h-1zM443 310h1v1h-1zM443 298h1v1h-1zM443 285h1v1h-1zM443 273h1v1h-1zM443 261h1v1h-1zM443 248h1v1h-1zM443 236h1v1h-1zM443 224h1v1h-1zM443 211h1v1h-1zM443 199h1v1h-1zM443 187h1v1h-1zM443 175h1v1h-1zM455 728h1v1h-1zM455 716h1v1h-1zM455 703h1v1h-1zM455 691h1v1h-1zM455 679h1v1h-1zM455 667h1v1h-1zM455 654h1v1h-1zM455 642h1v1h-1zM455 630h1v1h-1zM455 617h1v1h-1zM455 605h1v1h-1zM455 593h1v1h-1zM455 580h1v1h-1zM455 568h1v1h-1zM455 556h1v1h-1zM455 544h1v1h-1zM455 531h1v1h-1zM455 519h1v1h-1zM455 507h1v1h-1zM455 494h1v1h-1zM455 482h1v1h-1zM455 470h1v1h-1zM455 457h1v1h-1zM455 445h1v1h-1zM455 433h1v1h-1zM455 421h1v1h-1zM455 408h1v1h-1zM455 396h1v1h-1zM455 384h1v1h-1zM455 371h1v1h-1zM455 359h1v1h-1zM455 347h1v1h-1zM455 334h1v1h-1zM455 322h1v1h-1zM455 310h1v1h-1zM455 298h1v1h-1zM455 285h1v1h-1zM455 273h1v1h-1zM455 261h1v1h-1zM455 248h1v1h-1zM455 236h1v1h-1zM455 224h1v1h-1zM455 211h1v1h-1zM455 199h1v1h-1zM455 187h1v1h-1zM455 175h1v1h-1zM468 728h1v1h-1zM468 716h1v1h-1zM468 703h1v1h-1zM468 691h1v1h-1zM468 679h1v1h-1zM468 667h1v1h-1zM468 654h1v1h-1zM468 642h1v1h-1zM468 630h1v1h-1zM468 617h1v1h-1zM468 605h1v1h-1zM468 593h1v1h-1zM468 580h1v1h-1zM468 568h1v1h-1zM468 556h1v1h-1zM468 544h1v1h-1zM468 531h1v1h-1zM468 519h1v1h-1zM468 507h1v1h-1zM468 494h1v1h-1zM468 482h1v1h-1zM468 470h1v1h-1zM468 457h1v1h-1zM468 445h1v1h-1zM468 433h1v1h-1zM468 421h1v1h-1zM468 408h1v1h-1zM468 396h1v1h-1zM468 384h1v1h-1zM468 371h1v1h-1zM468 359h1v1h-1zM468 347h1v1h-1zM468 334h1v1h-1zM468 322h1v1h-1zM468 310h1v1h-1zM468 298h1v1h-1zM468 285h1v1h-1zM468 273h1v1h-1zM468 261h1v1h-1zM468 248h1v1h-1zM468 236h1v1h-1zM468 224h1v1h-1zM468 211h1v1h-1zM468 199h1v1h-1zM468 187h1v1h-1zM468 175h1v1h-1zM480 728h1v1h-1zM480 716h1v1h-1zM480 703h1v1h-1zM480 691h1v1h-1zM480 679h1v1h-1zM480 667h1v1h-1zM480 654h1v1h-1zM480 642h1v1h-1zM480 630h1v1h-1zM480 617h1v1h-1zM480 605h1v1h-1zM480 593h1v1h-1zM480 580h1v1h-1zM480 568h1v1h-1zM480 556h1v1h-1zM480 544h1v1h-1zM480 531h1v1h-1zM480 519h1v1h-1zM480 507h1v1h-1zM480 494h1v1h-1zM480 482h1v1h-1zM480 470h1v1h-1zM480 457h1v1h-1zM480 445h1v1h-1zM480 433h1v1h-1zM480 421h1v1h-1zM480 408h1v1h-1zM480 396h1v1h-1zM480 384h1v1h-1zM480 371h1v1h-1zM480 359h1v1h-1zM480 347h1v1h-1zM480 334h1v1h-1zM480 322h1v1h-1zM480 310h1v1h-1zM480 298h1v1h-1zM480 285h1v1h-1zM480 273h1v1h-1zM480 261h1v1h-1zM480 248h1v1h-1zM480 236h1v1h-1zM480 224h1v1h-1zM480 211h1v1h-1zM480 199h1v1h-1zM480 187h1v1h-1zM480 175h1v1h-1zM492 728h1v1h-1zM492 716h1v1h-1zM492 703h1v1h-1zM492 691h1v1h-1zM492 679h1v1h-1zM492 667h1v1h-1zM492 654h1v1h-1zM492 642h1v1h-1zM492 630h1v1h-1zM492 617h1v1h-1zM492 605h1v1h-1zM492 593h1v1h-1zM492 580h1v1h-1zM492 568h1v1h-1zM492 556h1v1h-1zM492 544h1v1h-1zM492 531h1v1h-1zM492 519h1v1h-1zM492 507h1v1h-1zM492 494h1v1h-1zM492 482h1v1h-1zM492 470h1v1h-1zM492 457h1v1h-1zM492 445h1v1h-1zM492 433h1v1h-1zM492 421h1v1h-1zM492 408h1v1h-1zM492 396h1v1h-1zM492 384h1v1h-1zM492 371h1v1h-1zM492 359h1v1h-1zM492 347h1v1h-1zM492 334h1v1h-1zM492 322h1v1h-1zM492 310h1v1h-1zM492 298h1v1h-1zM492 285h1v1h-1zM492 273h1v1h-1zM492 261h1v1h-1zM492 248h1v1h-1zM492 236h1v1h-1zM492 224h1v1h-1zM492 211h1v1h-1zM492 199h1v1h-1zM492 187h1v1h-1zM492 175h1v1h-1zM505 728h1v1h-1zM505 716h1v1h-1zM505 703h1v1h-1zM505 691h1v1h-1zM505 679h1v1h-1zM505 667h1v1h-1zM505 654h1v1h-1zM505 642h1v1h-1zM505 630h1v1h-1zM505 617h1v1h-1zM505 605h1v1h-1zM505 593h1v1h-1zM505 580h1v1h-1zM505 568h1v1h-1zM505 556h1v1h-1zM505 544h1v1h-1zM505 531h1v1h-1zM505 519h1v1h-1zM505 507h1v1h-1zM505 494h1v1h-1zM505 482h1v1h-1zM505 470h1v1h-1zM505 457h1v1h-1zM505 445h1v1h-1zM505 433h1v1h-1zM505 421h1v1h-1zM505 408h1v1h-1zM505 396h1v1h-1zM505 384h1v1h-1zM505 371h1v1h-1zM505 359h1v1h-1zM505 347h1v1h-1zM505 334h1v1h-1zM505 322h1v1h-1zM505 310h1v1h-1zM505 298h1v1h-1zM505 285h1v1h-1zM505 273h1v1h-1zM505 261h1v1h-1zM505 248h1v1h-1zM505 236h1v1h-1zM505 224h1v1h-1zM505 211h1v1h-1zM505 199h1v1h-1zM505 187h1v1h-1zM505 175h1v1h-1zM517 728h1v1h-1zM517 716h1v1h-1zM517 703h1v1h-1zM517 691h1v1h-1zM517 679h1v1h-1zM517 667h1v1h-1zM517 654h1v1h-1zM517 642h1v1h-1zM517 630h1v1h-1zM517 617h1v1h-1zM517 605h1v1h-1zM517 593h1v1h-1zM517 580h1v1h-1zM517 568h1v1h-1zM517 556h1v1h-1zM517 544h1v1h-1zM517 531h1v1h-1zM517 519h1v1h-1zM517 507h1v1h-1zM517 494h1v1h-1zM517 482h1v1h-1zM517 470h1v1h-1zM517 457h1v1h-1zM517 445h1v1h-1zM517 433h1v1h-1zM517 421h1v1h-1zM517 408h1v1h-1zM517 396h1v1h-1zM517 384h1v1h-1zM517 371h1v1h-1zM517 359h1v1h-1zM517 347h1v1h-1zM517 334h1v1h-1zM517 322h1v1h-1zM517 310h1v1h-1zM517 298h1v1h-1zM517 285h1v1h-1zM517 273h1v1h-1zM517 261h1v1h-1zM517 248h1v1h-1zM517 236h1v1h-1zM517 224h1v1h-1zM517 211h1v1h-1zM517 199h1v1h-1zM517 187h1v1h-1zM517 175h1v1h-1zM529 728h1v1h-1zM529 716h1v1h-1zM529 703h1v1h-1zM529 691h1v1h-1zM529 679h1v1h-1zM529 667h1v1h-1zM529 654h1v1h-1zM529 642h1v1h-1zM529 630h1v1h-1zM529 617h1v1h-1zM529 605h1v1h-1zM529 593h1v1h-1zM529 580h1v1h-1zM529 568h1v1h-1zM529 556h1v1h-1zM529 544h1v1h-1zM529 531h1v1h-1zM529 519h1v1h-1zM529 507h1v1h-1zM529 494h1v1h-1zM529 482h1v1h-1zM529 470h1v1h-1zM529 457h1v1h-1zM529 445h1v1h-1zM529 433h1v1h-1zM529 421h1v1h-1zM529 408h1v1h-1zM529 396h1v1h-1zM529 384h1v1h-1zM529 371h1v1h-1zM529 359h1v1h-1zM529 347h1v1h-1zM529 334h1v1h-1zM529 322h1v1h-1zM529 310h1v1h-1zM529 298h1v1h-1zM529 285h1v1h-1zM529 273h1v1h-1zM529 261h1v1h-1zM529 248h1v1h-1zM529 236h1v1h-1zM529 224h1v1h-1zM529 211h1v1h-1zM529 199h1v1h-1zM529 187h1v1h-1zM529 175h1v1h-1zM541 728h1v1h-1zM541 716h1v1h-1zM541 703h1v1h-1zM541 691h1v1h-1zM541 679h1v1h-1zM541 667h1v1h-1zM541 654h1v1h-1zM541 642h1v1h-1zM541 630h1v1h-1zM541 617h1v1h-1zM541 605h1v1h-1zM541 593h1v1h-1zM541 580h1v1h-1zM541 568h1v1h-1zM541 556h1v1h-1zM541 544h1v1h-1zM541 531h1v1h-1zM541 519h1v1h-1zM541 507h1v1h-1zM541 494h1v1h-1zM541 482h1v1h-1zM541 470h1v1h-1zM541 457h1v1h-1zM541 445h1v1h-1zM541 433h1v1h-1zM541 421h1v1h-1zM541 408h1v1h-1zM541 396h1v1h-1zM541 384h1v1h-1zM541 371h1v1h-1zM541 359h1v1h-1zM541 347h1v1h-1zM541 334h1v1h-1zM541 322h1v1h-1zM541 310h1v1h-1zM541 298h1v1h-1zM541 285h1v1h-1zM541 273h1v1h-1zM541 261h1v1h-1zM541 248h1v1h-1zM541 236h1v1h-1zM541 224h1v1h-1zM541 211h1v1h-1zM541 199h1v1h-1zM541 187h1v1h-1zM541 175h1v1h-1zM554 728h1v1h-1zM554 716h1v1h-1zM554 703h1v1h-1zM554 691h1v1h-1zM554 679h1v1h-1zM554 667h1v1h-1zM554 654h1v1h-1zM554 642h1v1h-1zM554 630h1v1h-1zM554 617h1v1h-1zM554 605h1v1h-1zM554 593h1v1h-1zM554 580h1v1h-1zM554 568h1v1h-1zM554 556h1v1h-1zM554 544h1v1h-1zM554 531h1v1h-1zM554 519h1v1h-1zM554 507h1v1h-1zM554 494h1v1h-1zM554 482h1v1h-1zM554 470h1v1h-1zM554 457h1v1h-1zM554 445h1v1h-1zM554 433h1v1h-1zM554 421h1v1h-1zM554 408h1v1h-1zM554 396h1v1h-1zM554 384h1v1h-1zM554 371h1v1h-1zM554 359h1v1h-1zM554 347h1v1h-1zM554 334h1v1h-1zM554 322h1v1h-1zM554 310h1v1h-1zM554 298h1v1h-1zM554 285h1v1h-1zM554 273h1v1h-1zM554 261h1v1h-1zM554 248h1v1h-1zM554 236h1v1h-1zM554 224h1v1h-1zM554 211h1v1h-1zM554 199h1v1h-1zM554 187h1v1h-1zM554 175h1v1h-1zM566 728h1v1h-1zM566 716h1v1h-1zM566 703h1v1h-1zM566 691h1v1h-1zM566 679h1v1h-1zM566 667h1v1h-1zM566 654h1v1h-1zM566 642h1v1h-1zM566 630h1v1h-1zM566 617h1v1h-1zM566 605h1v1h-1zM566 593h1v1h-1zM566 580h1v1h-1zM566 568h1v1h-1zM566 556h1v1h-1zM566 544h1v1h-1zM566 531h1v1h-1zM566 519h1v1h-1zM566 507h1v1h-1zM566 494h1v1h-1zM566 482h1v1h-1zM566 470h1v1h-1zM566 457h1v1h-1zM566 445h1v1h-1zM566 433h1v1h-1zM566 421h1v1h-1zM566 408h1v1h-1zM566 396h1v1h-1zM566 384h1v1h-1zM566 371h1v1h-1zM566 359h1v1h-1zM566 347h1v1h-1zM566 334h1v1h-1zM566 322h1v1h-1zM566 310h1v1h-1zM566 298h1v1h-1zM566 285h1v1h-1zM566 273h1v1h-1zM566 261h1v1h-1zM566 248h1v1h-1zM566 236h1v1h-1zM566 224h1v1h-1zM566 211h1v1h-1zM566 199h1v1h-1zM566 187h1v1h-1zM566 175h1v1h-1zM578 728h1v1h-1zM578 716h1v1h-1zM578 703h1v1h-1zM578 691h1v1h-1zM578 679h1v1h-1zM578 667h1v1h-1zM578 654h1v1h-1zM578 642h1v1h-1zM578 630h1v1h-1zM578 617h1v1h-1zM578 605h1v1h-1zM578 593h1v1h-1zM578 580h1v1h-1zM578 568h1v1h-1zM578 556h1v1h-1zM578 544h1v1h-1zM578 531h1v1h-1zM578 519h1v1h-1zM578 507h1v1h-1zM578 494h1v1h-1zM578 482h1v1h-1zM578 470h1v1h-1zM578 457h1v1h-1zM578 445h1v1h-1zM578 433h1v1h-1zM578 421h1v1h-1zM578 408h1v1h-1zM578 396h1v1h-1zM578 384h1v1h-1zM578 371h1v1h-1zM578 359h1v1h-1zM578 347h1v1h-1zM578 334h1v1h-1zM578 322h1v1h-1zM578 310h1v1h-1zM578 298h1v1h-1zM578 285h1v1h-1zM578 273h1v1h-1zM578 261h1v1h-1zM578 248h1v1h-1zM578 236h1v1h-1zM578 224h1v1h-1zM578 211h1v1h-1zM578 199h1v1h-1zM578 187h1v1h-1zM578 175h1v1h-1zM591 728h1v1h-1zM591 716h1v1h-1zM591 703h1v1h-1zM591 691h1v1h-1zM591 679h1v1h-1zM591 667h1v1h-1zM591 654h1v1h-1zM591 642h1v1h-1zM591 630h1v1h-1zM591 617h1v1h-1zM591 605h1v1h-1zM591 593h1v1h-1zM591 580h1v1h-1zM591 568h1v1h-1zM591 556h1v1h-1zM591 544h1v1h-1zM591 531h1v1h-1zM591 519h1v1h-1zM591 507h1v1h-1zM591 494h1v1h-1zM591 482h1v1h-1zM591 470h1v1h-1zM591 457h1v1h-1zM591 445h1v1h-1zM591 433h1v1h-1zM591 421h1v1h-1zM591 408h1v1h-1zM591 396h1v1h-1zM591 384h1v1h-1zM591 371h1v1h-1zM591 359h1v1h-1zM591 347h1v1h-1zM591 334h1v1h-1zM591 322h1v1h-1zM591 310h1v1h-1zM591 298h1v1h-1zM591 285h1v1h-1zM591 273h1v1h-1zM591 261h1v1h-1zM591 248h1v1h-1zM591 236h1v1h-1zM591 224h1v1h-1zM591 211h1v1h-1zM591 199h1v1h-1zM591 187h1v1h-1zM591 175h1v1h-1zM603 728h1v1h-1zM603 716h1v1h-1zM603 703h1v1h-1zM603 691h1v1h-1zM603 679h1v1h-1zM603 667h1v1h-1zM603 654h1v1h-1zM603 642h1v1h-1zM603 630h1v1h-1zM603 617h1v1h-1zM603 605h1v1h-1zM603 593h1v1h-1zM603 580h1v1h-1zM603 568h1v1h-1zM603 556h1v1h-1zM603 544h1v1h-1zM603 531h1v1h-1zM603 519h1v1h-1zM603 507h1v1h-1zM603 494h1v1h-1zM603 482h1v1h-1zM603 470h1v1h-1zM603 457h1v1h-1zM603 445h1v1h-1zM603 433h1v1h-1zM603 421h1v1h-1zM603 408h1v1h-1zM603 396h1v1h-1zM603 384h1v1h-1zM603 371h1v1h-1zM603 359h1v1h-1zM603 347h1v1h-1zM603 334h1v1h-1zM603 322h1v1h-1zM603 310h1v1h-1zM603 298h1v1h-1zM603 285h1v1h-1zM603 273h1v1h-1zM603 261h1v1h-1zM603 248h1v1h-1zM603 236h1v1h-1zM603 224h1v1h-1zM603 211h1v1h-1zM603 199h1v1h-1zM603 187h1v1h-1zM603 175h1v1h-1zM615 728h1v1h-1zM615 716h1v1h-1zM615 703h1v1h-1zM615 691h1v1h-1zM615 679h1v1h-1zM615 667h1v1h-1zM615 654h1v1h-1zM615 642h1v1h-1zM615 630h1v1h-1zM615 617h1v1h-1zM615 605h1v1h-1zM615 593h1v1h-1zM615 580h1v1h-1zM615 568h1v1h-1zM615 556h1v1h-1zM615 544h1v1h-1zM615 531h1v1h-1zM615 519h1v1h-1zM615 507h1v1h-1zM615 494h1v1h-1zM615 482h1v1h-1zM615 470h1v1h-1zM615 457h1v1h-1zM615 445h1v1h-1zM615 433h1v1h-1zM615 421h1v1h-1zM615 408h1v1h-1zM615 396h1v1h-1zM615 384h1v1h-1zM615 371h1v1h-1zM615 359h1v1h-1zM615 347h1v1h-1zM615 334h1v1h-1zM615 322h1v1h-1zM615 310h1v1h-1zM615 298h1v1h-1zM615 285h1v1h-1zM615 273h1v1h-1zM615 261h1v1h-1zM615 248h1v1h-1zM615 236h1v1h-1zM615 224h1v1h-1zM615 211h1v1h-1zM615 199h1v1h-1zM615 187h1v1h-1zM615 175h1v1h-1zM628 728h1v1h-1zM628 716h1v1h-1zM628 703h1v1h-1zM628 691h1v1h-1zM628 679h1v1h-1zM628 667h1v1h-1zM628 654h1v1h-1zM628 642h1v1h-1zM628 630h1v1h-1zM628 617h1v1h-1zM628 605h1v1h-1zM628 593h1v1h-1zM628 580h1v1h-1zM628 568h1v1h-1zM628 556h1v1h-1zM628 544h1v1h-1zM628 531h1v1h-1zM628 519h1v1h-1zM628 507h1v1h-1zM628 494h1v1h-1zM628 482h1v1h-1zM628 470h1v1h-1zM628 457h1v1h-1zM628 445h1v1h-1zM628 433h1v1h-1zM628 421h1v1h-1zM628 408h1v1h-1zM628 396h1v1h-1zM628 384h1v1h-1zM628 371h1v1h-1zM628 359h1v1h-1zM628 347h1v1h-1zM628 334h1v1h-1zM628 322h1v1h-1zM628 310h1v1h-1zM628 298h1v1h-1zM628 285h1v1h-1zM628 273h1v1h-1zM628 261h1v1h-1zM628 248h1v1h-1zM628 236h1v1h-1zM628 224h1v1h-1zM628 211h1v1h-1zM628 199h1v1h-1zM628 187h1v1h-1zM628 175h1v1h-1zM640 728h1v1h-1zM640 716h1v1h-1zM640 703h1v1h-1zM640 691h1v1h-1zM640 679h1v1h-1zM640 667h1v1h-1zM640 654h1v1h-1zM640 642h1v1h-1zM640 630h1v1h-1zM640 617h1v1h-1zM640 605h1v1h-1zM640 593h1v1h-1zM640 580h1v1h-1zM640 568h1v1h-1zM640 556h1v1h-1zM640 544h1v1h-1zM640 531h1v1h-1zM640 519h1v1h-1zM640 507h1v1h-1zM640 494h1v1h-1zM640 482h1v1h-1zM640 470h1v1h-1zM640 457h1v1h-1zM640 445h1v1h-1zM640 433h1v1h-1zM640 421h1v1h-1zM640 408h1v1h-1zM640 396h1v1h-1zM640 384h1v1h-1zM640 371h1v1h-1zM640 359h1v1h-1zM640 347h1v1h-1zM640 334h1v1h-1zM640 322h1v1h-1zM640 310h1v1h-1zM640 298h1v1h-1zM640 285h1v1h-1zM640 273h1v1h-1zM640 261h1v1h-1zM640 248h1v1h-1zM640 236h1v1h-1zM640 224h1v1h-1zM640 211h1v1h-1zM640 199h1v1h-1zM640 187h1v1h-1zM640 175h1v1h-1zM652 728h1v1h-1zM652 716h1v1h-1zM652 703h1v1h-1zM652 691h1v1h-1zM652 679h1v1h-1zM652 667h1v1h-1zM652 654h1v1h-1zM652 642h1v1h-1zM652 630h1v1h-1zM652 617h1v1h-1zM652 605h1v1h-1zM652 593h1v1h-1zM652 580h1v1h-1zM652 568h1v1h-1zM652 556h1v1h-1zM652 544h1v1h-1zM652 531h1v1h-1zM652 519h1v1h-1zM652 507h1v1h-1zM652 494h1v1h-1zM652 482h1v1h-1zM652 470h1v1h-1zM652 457h1v1h-1zM652 445h1v1h-1zM652 433h1v1h-1zM652 421h1v1h-1zM652 408h1v1h-1zM652 396h1v1h-1zM652 384h1v1h-1zM652 371h1v1h-1zM652 359h1v1h-1zM652 347h1v1h-1zM652 334h1v1h-1zM652 322h1v1h-1zM652 310h1v1h-1zM652 298h1v1h-1zM652 285h1v1h-1zM652 273h1v1h-1zM652 261h1v1h-1zM652 248h1v1h-1zM652 236h1v1h-1zM652 224h1v1h-1zM652 211h1v1h-1zM652 199h1v1h-1zM652 187h1v1h-1zM652 175h1v1h-1zM664 728h1v1h-1zM664 716h1v1h-1zM664 703h1v1h-1zM664 691h1v1h-1zM664 679h1v1h-1zM664 667h1v1h-1zM664 654h1v1h-1zM664 642h1v1h-1zM664 630h1v1h-1zM664 617h1v1h-1zM664 605h1v1h-1zM664 593h1v1h-1zM664 580h1v1h-1zM664 568h1v1h-1zM664 556h1v1h-1zM664 544h1v1h-1zM664 531h1v1h-1zM664 519h1v1h-1zM664 507h1v1h-1zM664 494h1v1h-1zM664 482h1v1h-1zM664 470h1v1h-1zM664 457h1v1h-1zM664 445h1v1h-1zM664 433h1v1h-1zM664 421h1v1h-1zM664 408h1v1h-1zM664 396h1v1h-1zM664 384h1v1h-1zM664 371h1v1h-1zM664 359h1v1h-1zM664 347h1v1h-1zM664 334h1v1h-1zM664 322h1v1h-1zM664 310h1v1h-1zM664 298h1v1h-1zM664 285h1v1h-1zM664 273h1v1h-1zM664 261h1v1h-1zM664 248h1v1h-1zM664 236h1v1h-1zM664 224h1v1h-1zM664 211h1v1h-1zM664 199h1v1h-1zM664 187h1v1h-1zM664 175h1v1h-1zM677 728h1v1h-1zM677 716h1v1h-1zM677 703h1v1h-1zM677 691h1v1h-1zM677 679h1v1h-1zM677 667h1v1h-1zM677 654h1v1h-1zM677 642h1v1h-1zM677 630h1v1h-1zM677 617h1v1h-1zM677 605h1v1h-1zM677 593h1v1h-1zM677 580h1v1h-1zM677 568h1v1h-1zM677 556h1v1h-1zM677 544h1v1h-1zM677 531h1v1h-1zM677 519h1v1h-1zM677 507h1v1h-1zM677 494h1v1h-1zM677 482h1v1h-1zM677 470h1v1h-1zM677 457h1v1h-1zM677 445h1v1h-1zM677 433h1v1h-1zM677 421h1v1h-1zM677 408h1v1h-1zM677 396h1v1h-1zM677 384h1v1h-1zM677 371h1v1h-1zM677 359h1v1h-1zM677 347h1v1h-1zM677 334h1v1h-1zM677 322h1v1h-1zM677 310h1v1h-1zM677 298h1v1h-1zM677 285h1v1h-1zM677 273h1v1h-1zM677 261h1v1h-1zM677 248h1v1h-1zM677 236h1v1h-1zM677 224h1v1h-1zM677 211h1v1h-1zM677 199h1v1h-1zM677 187h1v1h-1zM677 175h1v1h-1zM689 728h1v1h-1zM689 716h1v1h-1zM689 703h1v1h-1zM689 691h1v1h-1zM689 679h1v1h-1zM689 667h1v1h-1zM689 654h1v1h-1zM689 642h1v1h-1zM689 630h1v1h-1zM689 617h1v1h-1zM689 605h1v1h-1zM689 593h1v1h-1zM689 580h1v1h-1zM689 568h1v1h-1zM689 556h1v1h-1zM689 544h1v1h-1zM689 531h1v1h-1zM689 519h1v1h-1zM689 507h1v1h-1zM689 494h1v1h-1zM689 482h1v1h-1zM689 470h1v1h-1zM689 457h1v1h-1zM689 445h1v1h-1zM689 433h1v1h-1zM689 421h1v1h-1zM689 408h1v1h-1zM689 396h1v1h-1zM689 384h1v1h-1zM689 371h1v1h-1zM689 359h1v1h-1zM689 347h1v1h-1zM689 334h1v1h-1zM689 322h1v1h-1zM689 310h1v1h-1zM689 298h1v1h-1zM689 285h1v1h-1zM689 273h1v1h-1zM689 261h1v1h-1zM689 248h1v1h-1zM689 236h1v1h-1zM689 224h1v1h-1zM689 211h1v1h-1zM689 199h1v1h-1zM689 187h1v1h-1zM689 175h1v1h-1zM701 728h1v1h-1zM701 716h1v1h-1zM701 703h1v1h-1zM701 691h1v1h-1zM701 679h1v1h-1zM701 667h1v1h-1zM701 654h1v1h-1zM701 642h1v1h-1zM701 630h1v1h-1zM701 617h1v1h-1zM701 605h1v1h-1zM701 593h1v1h-1zM701 580h1v1h-1zM701 568h1v1h-1zM701 556h1v1h-1zM701 544h1v1h-1zM701 531h1v1h-1zM701 519h1v1h-1zM701 507h1v1h-1zM701 494h1v1h-1zM701 482h1v1h-1zM701 470h1v1h-1zM701 457h1v1h-1zM701 445h1v1h-1zM701 433h1v1h-1zM701 421h1v1h-1zM701 408h1v1h-1zM701 396h1v1h-1zM701 384h1v1h-1zM701 371h1v1h-1zM701 359h1v1h-1zM701 347h1v1h-1zM701 334h1v1h-1zM701 322h1v1h-1zM701 310h1v1h-1zM701 298h1v1h-1zM701 285h1v1h-1zM701 273h1v1h-1zM701 261h1v1h-1zM701 248h1v1h-1zM701 236h1v1h-1zM701 224h1v1h-1zM701 211h1v1h-1zM701 199h1v1h-1zM701 187h1v1h-1zM701 175h1v1h-1zM714 728h1v1h-1zM714 716h1v1h-1zM714 703h1v1h-1zM714 691h1v1h-1zM714 679h1v1h-1zM714 667h1v1h-1zM714 654h1v1h-1zM714 642h1v1h-1zM714 630h1v1h-1zM714 617h1v1h-1zM714 605h1v1h-1zM714 593h1v1h-1zM714 580h1v1h-1zM714 568h1v1h-1zM714 556h1v1h-1zM714 544h1v1h-1zM714 531h1v1h-1zM714 519h1v1h-1zM714 507h1v1h-1zM714 494h1v1h-1zM714 482h1v1h-1zM714 470h1v1h-1zM714 457h1v1h-1zM714 445h1v1h-1zM714 433h1v1h-1zM714 421h1v1h-1zM714 408h1v1h-1zM714 396h1v1h-1zM714 384h1v1h-1zM714 371h1v1h-1zM714 359h1v1h-1zM714 347h1v1h-1zM714 334h1v1h-1zM714 322h1v1h-1zM714 310h1v1h-1zM714 298h1v1h-1zM714 285h1v1h-1zM714 273h1v1h-1zM714 261h1v1h-1zM714 248h1v1h-1zM714 236h1v1h-1zM714 224h1v1h-1zM714 211h1v1h-1zM714 199h1v1h-1zM714 187h1v1h-1zM714 175h1v1h-1zM726 728h1v1h-1zM726 716h1v1h-1zM726 703h1v1h-1zM726 691h1v1h-1zM726 679h1v1h-1zM726 667h1v1h-1zM726 654h1v1h-1zM726 642h1v1h-1zM726 630h1v1h-1zM726 617h1v1h-1zM726 605h1v1h-1zM726 593h1v1h-1zM726 580h1v1h-1zM726 568h1v1h-1zM726 556h1v1h-1zM726 544h1v1h-1zM726 531h1v1h-1zM726 519h1v1h-1zM726 507h1v1h-1zM726 494h1v1h-1zM726 482h1v1h-1zM726 470h1v1h-1zM726 457h1v1h-1zM726 445h1v1h-1zM726 433h1v1h-1zM726 421h1v1h-1zM726 408h1v1h-1zM726 396h1v1h-1zM726 384h1v1h-1zM726 371h1v1h-1zM726 359h1v1h-1zM726 347h1v1h-1zM726 334h1v1h-1zM726 322h1v1h-1zM726 310h1v1h-1zM726 298h1v1h-1zM726 285h1v1h-1zM726 273h1v1h-1zM726 261h1v1h-1zM726 248h1v1h-1zM726 236h1v1h-1zM726 224h1v1h-1zM726 211h1v1h-1zM726 199h1v1h-1zM726 187h1v1h-1zM726 175h1v1h-1zM738 728h1v1h-1zM738 716h1v1h-1zM738 703h1v1h-1zM738 691h1v1h-1zM738 679h1v1h-1zM738 667h1v1h-1zM738 654h1v1h-1zM738 642h1v1h-1zM738 630h1v1h-1zM738 617h1v1h-1zM738 605h1v1h-1zM738 593h1v1h-1zM738 580h1v1h-1zM738 568h1v1h-1zM738 556h1v1h-1zM738 544h1v1h-1zM738 531h1v1h-1zM738 519h1v1h-1zM738 507h1v1h-1zM738 494h1v1h-1zM738 482h1v1h-1zM738 470h1v1h-1zM738 457h1v1h-1zM738 445h1v1h-1zM738 433h1v1h-1zM738 421h1v1h-1zM738 408h1v1h-1zM738 396h1v1h-1zM738 384h1v1h-1zM738 371h1v1h-1zM738 359h1v1h-1zM738 347h1v1h-1zM738 334h1v1h-1zM738 322h1v1h-1zM738 310h1v1h-1zM738 298h1v1h-1zM738 285h1v1h-1zM738 273h1v1h-1zM738 261h1v1h-1zM738 248h1v1h-1zM738 236h1v1h-1zM738 224h1v1h-1zM738 211h1v1h-1zM738 199h1v1h-1zM738 187h1v1h-1zM738 175h1v1h-1zM750 728h1v1h-1zM750 716h1v1h-1zM750 703h1v1h-1zM750 691h1v1h-1zM750 679h1v1h-1zM750 667h1v1h-1zM750 654h1v1h-1zM750 642h1v1h-1zM750 630h1v1h-1zM750 617h1v1h-1zM750 605h1v1h-1zM750 593h1v1h-1zM750 580h1v1h-1zM750 568h1v1h-1zM750 556h1v1h-1zM750 544h1v1h-1zM750 531h1v1h-1zM750 519h1v1h-1zM750 507h1v1h-1zM750 494h1v1h-1zM750 482h1v1h-1zM750 470h1v1h-1zM750 457h1v1h-1zM750 445h1v1h-1zM750 433h1v1h-1zM750 421h1v1h-1zM750 408h1v1h-1zM750 396h1v1h-1zM750 384h1v1h-1zM750 371h1v1h-1zM750 359h1v1h-1zM750 347h1v1h-1zM750 334h1v1h-1zM750 322h1v1h-1zM750 310h1v1h-1zM750 298h1v1h-1zM750 285h1v1h-1zM750 273h1v1h-1zM750 261h1v1h-1zM750 248h1v1h-1zM750 236h1v1h-1zM750 224h1v1h-1zM750 211h1v1h-1zM750 199h1v1h-1zM750 187h1v1h-1zM750 175h1v1h-1zM763 728h1v1h-1zM763 716h1v1h-1zM763 703h1v1h-1zM763 691h1v1h-1zM763 679h1v1h-1zM763 667h1v1h-1zM763 654h1v1h-1zM763 642h1v1h-1zM763 630h1v1h-1zM763 617h1v1h-1zM763 605h1v1h-1zM763 593h1v1h-1zM763 580h1v1h-1zM763 568h1v1h-1zM763 556h1v1h-1zM763 544h1v1h-1zM763 531h1v1h-1zM763 519h1v1h-1zM763 507h1v1h-1zM763 494h1v1h-1zM763 482h1v1h-1zM763 470h1v1h-1zM763 457h1v1h-1zM763 445h1v1h-1zM763 433h1v1h-1zM763 421h1v1h-1zM763 408h1v1h-1zM763 396h1v1h-1zM763 384h1v1h-1zM763 371h1v1h-1zM763 359h1v1h-1zM763 347h1v1h-1zM763 334h1v1h-1zM763 322h1v1h-1zM763 310h1v1h-1zM763 298h1v1h-1zM763 285h1v1h-1zM763 273h1v1h-1zM763 261h1v1h-1zM763 248h1v1h-1zM763 236h1v1h-1zM763 224h1v1h-1zM763 211h1v1h-1zM763 199h1v1h-1zM763 187h1v1h-1zM763 175h1v1h-1zM775 728h1v1h-1zM775 716h1v1h-1zM775 703h1v1h-1zM775 691h1v1h-1zM775 679h1v1h-1zM775 667h1v1h-1zM775 654h1v1h-1zM775 642h1v1h-1zM775 630h1v1h-1zM775 617h1v1h-1zM775 605h1v1h-1zM775 593h1v1h-1zM775 580h1v1h-1zM775 568h1v1h-1zM775 556h1v1h-1zM775 544h1v1h-1zM775 531h1v1h-1zM775 519h1v1h-1zM775 507h1v1h-1zM775 494h1v1h-1zM775 482h1v1h-1zM775 470h1v1h-1zM775 457h1v1h-1zM775 445h1v1h-1zM775 433h1v1h-1zM775 421h1v1h-1zM775 408h1v1h-1zM775 396h1v1h-1zM775 384h1v1h-1zM775 371h1v1h-1zM775 359h1v1h-1zM775 347h1v1h-1zM775 334h1v1h-1zM775 322h1v1h-1zM775 310h1v1h-1zM775 298h1v1h-1zM775 285h1v1h-1zM775 273h1v1h-1zM775 261h1v1h-1zM775 248h1v1h-1zM775 236h1v1h-1zM775 224h1v1h-1zM775 211h1v1h-1zM775 199h1v1h-1zM775 187h1v1h-1zM775 175h1v1h-1zM787 728h1v1h-1zM787 716h1v1h-1zM787 703h1v1h-1zM787 691h1v1h-1zM787 679h1v1h-1zM787 667h1v1h-1zM787 654h1v1h-1zM787 642h1v1h-1zM787 630h1v1h-1zM787 617h1v1h-1zM787 605h1v1h-1zM787 593h1v1h-1zM787 580h1v1h-1zM787 568h1v1h-1zM787 556h1v1h-1zM787 544h1v1h-1zM787 531h1v1h-1zM787 519h1v1h-1zM787 507h1v1h-1zM787 494h1v1h-1zM787 482h1v1h-1zM787 470h1v1h-1zM787 457h1v1h-1zM787 445h1v1h-1zM787 433h1v1h-1zM787 421h1v1h-1zM787 408h1v1h-1zM787 396h1v1h-1zM787 384h1v1h-1zM787 371h1v1h-1zM787 359h1v1h-1zM787 347h1v1h-1zM787 334h1v1h-1zM787 322h1v1h-1zM787 310h1v1h-1zM787 298h1v1h-1zM787 285h1v1h-1zM787 273h1v1h-1zM787 261h1v1h-1zM787 248h1v1h-1zM787 236h1v1h-1zM787 224h1v1h-1zM787 211h1v1h-1zM787 199h1v1h-1zM787 187h1v1h-1zM787 175h1v1h-1zM800 728h1v1h-1zM800 716h1v1h-1zM800 703h1v1h-1zM800 691h1v1h-1zM800 679h1v1h-1zM800 667h1v1h-1zM800 654h1v1h-1zM800 642h1v1h-1zM800 630h1v1h-1zM800 617h1v1h-1zM800 605h1v1h-1zM800 593h1v1h-1zM800 580h1v1h-1zM800 568h1v1h-1zM800 556h1v1h-1zM800 544h1v1h-1zM800 531h1v1h-1zM800 519h1v1h-1zM800 507h1v1h-1zM800 494h1v1h-1zM800 482h1v1h-1zM800 470h1v1h-1zM800 457h1v1h-1zM800 445h1v1h-1zM800 433h1v1h-1zM800 421h1v1h-1zM800 408h1v1h-1zM800 396h1v1h-1zM800 384h1v1h-1zM800 371h1v1h-1zM800 359h1v1h-1zM800 347h1v1h-1zM800 334h1v1h-1zM800 322h1v1h-1zM800 310h1v1h-1zM800 298h1v1h-1zM800 285h1v1h-1zM800 273h1v1h-1zM800 261h1v1h-1zM800 248h1v1h-1zM800 236h1v1h-1zM800 224h1v1h-1zM800 211h1v1h-1zM800 199h1v1h-1zM800 187h1v1h-1zM800 175h1v1h-1zM812 728h1v1h-1zM812 716h1v1h-1zM812 703h1v1h-1zM812 691h1v1h-1zM812 679h1v1h-1zM812 667h1v1h-1zM812 654h1v1h-1zM812 642h1v1h-1zM812 630h1v1h-1zM812 617h1v1h-1zM812 605h1v1h-1zM812 593h1v1h-1zM812 580h1v1h-1zM812 568h1v1h-1zM812 556h1v1h-1zM812 544h1v1h-1zM812 531h1v1h-1zM812 519h1v1h-1zM812 507h1v1h-1zM812 494h1v1h-1zM812 482h1v1h-1zM812 470h1v1h-1zM812 457h1v1h-1zM812 445h1v1h-1zM812 433h1v1h-1zM812 421h1v1h-1zM812 408h1v1h-1zM812 396h1v1h-1zM812 384h1v1h-1zM812 371h1v1h-1zM812 359h1v1h-1zM812 347h1v1h-1zM812 334h1v1h-1zM812 322h1v1h-1zM812 310h1v1h-1zM812 298h1v1h-1zM812 285h1v1h-1zM812 273h1v1h-1zM812 261h1v1h-1zM812 248h1v1h-1zM812 236h1v1h-1zM812 224h1v1h-1zM812 211h1v1h-1zM812 199h1v1h-1zM812 187h1v1h-1zM812 175h1v1h-1zM824 728h1v1h-1zM824 716h1v1h-1zM824 703h1v1h-1zM824 691h1v1h-1zM824 679h1v1h-1zM824 667h1v1h-1zM824 654h1v1h-1zM824 642h1v1h-1zM824 630h1v1h-1zM824 617h1v1h-1zM824 605h1v1h-1zM824 593h1v1h-1zM824 580h1v1h-1zM824 568h1v1h-1zM824 556h1v1h-1zM824 544h1v1h-1zM824 531h1v1h-1zM824 519h1v1h-1zM824 507h1v1h-1zM824 494h1v1h-1zM824 482h1v1h-1zM824 470h1v1h-1zM824 457h1v1h-1zM824 445h1v1h-1zM824 433h1v1h-1zM824 421h1v1h-1zM824 408h1v1h-1zM824 396h1v1h-1zM824 384h1v1h-1zM824 371h1v1h-1zM824 359h1v1h-1zM824 347h1v1h-1zM824 334h1v1h-1zM824 322h1v1h-1zM824 310h1v1h-1zM824 298h1v1h-1zM824 285h1v1h-1zM824 273h1v1h-1zM824 261h1v1h-1zM824 248h1v1h-1zM824 236h1v1h-1zM824 224h1v1h-1zM824 211h1v1h-1zM824 199h1v1h-1zM824 187h1v1h-1zM824 175h1v1h-1zM836 728h1v1h-1zM836 716h1v1h-1zM836 703h1v1h-1zM836 691h1v1h-1zM836 679h1v1h-1zM836 667h1v1h-1zM836 654h1v1h-1zM836 642h1v1h-1zM836 630h1v1h-1zM836 617h1v1h-1zM836 605h1v1h-1zM836 593h1v1h-1zM836 580h1v1h-1zM836 568h1v1h-1zM836 556h1v1h-1zM836 544h1v1h-1zM836 531h1v1h-1zM836 519h1v1h-1zM836 507h1v1h-1zM836 494h1v1h-1zM836 482h1v1h-1zM836 470h1v1h-1zM836 457h1v1h-1zM836 445h1v1h-1zM836 433h1v1h-1zM836 421h1v1h-1zM836 408h1v1h-1zM836 396h1v1h-1zM836 384h1v1h-1zM836 371h1v1h-1zM836 359h1v1h-1zM836 347h1v1h-1zM836 334h1v1h-1zM836 322h1v1h-1zM836 310h1v1h-1zM836 298h1v1h-1zM836 285h1v1h-1zM836 273h1v1h-1zM836 261h1v1h-1zM836 248h1v1h-1zM836 236h1v1h-1zM836 224h1v1h-1zM836 211h1v1h-1zM836 199h1v1h-1zM836 187h1v1h-1zM836 175h1v1h-1zM849 728h1v1h-1zM849 716h1v1h-1zM849 703h1v1h-1zM849 691h1v1h-1zM849 679h1v1h-1zM849 667h1v1h-1zM849 654h1v1h-1zM849 642h1v1h-1zM849 630h1v1h-1zM849 617h1v1h-1zM849 605h1v1h-1zM849 593h1v1h-1zM849 580h1v1h-1zM849 568h1v1h-1zM849 556h1v1h-1zM849 544h1v1h-1zM849 531h1v1h-1zM849 519h1v1h-1zM849 507h1v1h-1zM849 494h1v1h-1zM849 482h1v1h-1zM849 470h1v1h-1zM849 457h1v1h-1zM849 445h1v1h-1zM849 433h1v1h-1zM849 421h1v1h-1zM849 408h1v1h-1zM849 396h1v1h-1zM849 384h1v1h-1zM849 371h1v1h-1zM849 359h1v1h-1zM849 347h1v1h-1zM849 334h1v1h-1zM849 322h1v1h-1zM849 310h1v1h-1zM849 298h1v1h-1zM849 285h1v1h-1zM849 273h1v1h-1zM849 261h1v1h-1zM849 248h1v1h-1zM849 236h1v1h-1zM849 224h1v1h-1zM849 211h1v1h-1zM849 199h1v1h-1zM849 187h1v1h-1zM849 175h1v1h-1zM861 728h1v1h-1zM861 716h1v1h-1zM861 703h1v1h-1zM861 691h1v1h-1zM861 679h1v1h-1zM861 667h1v1h-1zM861 654h1v1h-1zM861 642h1v1h-1zM861 630h1v1h-1zM861 617h1v1h-1zM861 605h1v1h-1zM861 593h1v1h-1zM861 580h1v1h-1zM861 568h1v1h-1zM861 556h1v1h-1zM861 544h1v1h-1zM861 531h1v1h-1zM861 519h1v1h-1zM861 507h1v1h-1zM861 494h1v1h-1zM861 482h1v1h-1zM861 470h1v1h-1zM861 457h1v1h-1zM861 445h1v1h-1zM861 433h1v1h-1zM861 421h1v1h-1zM861 408h1v1h-1zM861 396h1v1h-1zM861 384h1v1h-1zM861 371h1v1h-1zM861 359h1v1h-1zM861 347h1v1h-1zM861 334h1v1h-1zM861 322h1v1h-1zM861 310h1v1h-1zM861 298h1v1h-1zM861 285h1v1h-1zM861 273h1v1h-1zM861 261h1v1h-1zM861 248h1v1h-1zM861 236h1v1h-1zM861 224h1v1h-1zM861 211h1v1h-1zM861 199h1v1h-1zM861 187h1v1h-1zM861 175h1v1h-1zM873 728h1v1h-1zM873 716h1v1h-1zM873 703h1v1h-1zM873 691h1v1h-1zM873 679h1v1h-1zM873 667h1v1h-1zM873 654h1v1h-1zM873 642h1v1h-1zM873 630h1v1h-1zM873 617h1v1h-1zM873 605h1v1h-1zM873 593h1v1h-1zM873 580h1v1h-1zM873 568h1v1h-1zM873 556h1v1h-1zM873 544h1v1h-1zM873 531h1v1h-1zM873 519h1v1h-1zM873 507h1v1h-1zM873 494h1v1h-1zM873 482h1v1h-1zM873 470h1v1h-1zM873 457h1v1h-1zM873 445h1v1h-1zM873 433h1v1h-1zM873 421h1v1h-1zM873 408h1v1h-1zM873 396h1v1h-1zM873 384h1v1h-1zM873 371h1v1h-1zM873 359h1v1h-1zM873 347h1v1h-1zM873 334h1v1h-1zM873 322h1v1h-1zM873 310h1v1h-1zM873 298h1v1h-1zM873 285h1v1h-1zM873 273h1v1h-1zM873 261h1v1h-1zM873 248h1v1h-1zM873 236h1v1h-1zM873 224h1v1h-1zM873 211h1v1h-1zM873 199h1v1h-1zM873 187h1v1h-1zM873 175h1v1h-1zM886 728h1v1h-1zM886 716h1v1h-1zM886 703h1v1h-1zM886 691h1v1h-1zM886 679h1v1h-1zM886 667h1v1h-1zM886 654h1v1h-1zM886 642h1v1h-1zM886 630h1v1h-1zM886 617h1v1h-1zM886 605h1v1h-1zM886 593h1v1h-1zM886 580h1v1h-1zM886 568h1v1h-1zM886 556h1v1h-1zM886 544h1v1h-1zM886 531h1v1h-1zM886 519h1v1h-1zM886 507h1v1h-1zM886 494h1v1h-1zM886 482h1v1h-1zM886 470h1v1h-1zM886 457h1v1h-1zM886 445h1v1h-1zM886 433h1v1h-1zM886 421h1v1h-1zM886 408h1v1h-1zM886 396h1v1h-1zM886 384h1v1h-1zM886 371h1v1h-1zM886 359h1v1h-1zM886 347h1v1h-1zM886 334h1v1h-1zM886 322h1v1h-1zM886 310h1v1h-1zM886 298h1v1h-1zM886 285h1v1h-1zM886 273h1v1h-1zM886 261h1v1h-1zM886 248h1v1h-1zM886 236h1v1h-1zM886 224h1v1h-1zM886 211h1v1h-1zM886 199h1v1h-1zM886 187h1v1h-1zM886 175h1v1h-1zM898 728h1v1h-1zM898 716h1v1h-1zM898 703h1v1h-1zM898 691h1v1h-1zM898 679h1v1h-1zM898 667h1v1h-1zM898 654h1v1h-1zM898 642h1v1h-1zM898 630h1v1h-1zM898 617h1v1h-1zM898 605h1v1h-1zM898 593h1v1h-1zM898 580h1v1h-1zM898 568h1v1h-1zM898 556h1v1h-1zM898 544h1v1h-1zM898 531h1v1h-1zM898 519h1v1h-1zM898 507h1v1h-1zM898 494h1v1h-1zM898 482h1v1h-1zM898 470h1v1h-1zM898 457h1v1h-1zM898 445h1v1h-1zM898 433h1v1h-1zM898 421h1v1h-1zM898 408h1v1h-1zM898 396h1v1h-1zM898 384h1v1h-1zM898 371h1v1h-1zM898 359h1v1h-1zM898 347h1v1h-1zM898 334h1v1h-1zM898 322h1v1h-1zM898 310h1v1h-1zM898 298h1v1h-1zM898 285h1v1h-1zM898 273h1v1h-1zM898 261h1v1h-1zM898 248h1v1h-1zM898 236h1v1h-1zM898 224h1v1h-1zM898 211h1v1h-1zM898 199h1v1h-1zM898 187h1v1h-1zM898 175h1v1h-1zM910 728h1v1h-1zM910 716h1v1h-1zM910 703h1v1h-1zM910 691h1v1h-1zM910 679h1v1h-1zM910 667h1v1h-1zM910 654h1v1h-1zM910 642h1v1h-1zM910 630h1v1h-1zM910 617h1v1h-1zM910 605h1v1h-1zM910 593h1v1h-1zM910 580h1v1h-1zM910 568h1v1h-1zM910 556h1v1h-1zM910 544h1v1h-1zM910 531h1v1h-1zM910 519h1v1h-1zM910 507h1v1h-1zM910 494h1v1h-1zM910 482h1v1h-1zM910 470h1v1h-1zM910 457h1v1h-1zM910 445h1v1h-1zM910 433h1v1h-1zM910 421h1v1h-1zM910 408h1v1h-1zM910 396h1v1h-1zM910 384h1v1h-1zM910 371h1v1h-1zM910 359h1v1h-1zM910 347h1v1h-1zM910 334h1v1h-1zM910 322h1v1h-1zM910 310h1v1h-1zM910 298h1v1h-1zM910 285h1v1h-1zM910 273h1v1h-1zM910 261h1v1h-1zM910 248h1v1h-1zM910 236h1v1h-1zM910 224h1v1h-1zM910 211h1v1h-1zM910 199h1v1h-1zM910 187h1v1h-1zM910 175h1v1h-1zM922 728h1v1h-1zM922 716h1v1h-1zM922 703h1v1h-1zM922 691h1v1h-1zM922 679h1v1h-1zM922 667h1v1h-1zM922 654h1v1h-1zM922 642h1v1h-1zM922 630h1v1h-1zM922 617h1v1h-1zM922 605h1v1h-1zM922 593h1v1h-1zM922 580h1v1h-1zM922 568h1v1h-1zM922 556h1v1h-1zM922 544h1v1h-1zM922 531h1v1h-1zM922 519h1v1h-1zM922 507h1v1h-1zM922 494h1v1h-1zM922 482h1v1h-1zM922 470h1v1h-1zM922 457h1v1h-1zM922 445h1v1h-1zM922 433h1v1h-1zM922 421h1v1h-1zM922 408h1v1h-1zM922 396h1v1h-1zM922 384h1v1h-1zM922 371h1v1h-1zM922 359h1v1h-1zM922 347h1v1h-1zM922 334h1v1h-1zM922 322h1v1h-1zM922 310h1v1h-1zM922 298h1v1h-1zM922 285h1v1h-1zM922 273h1v1h-1zM922 261h1v1h-1zM922 248h1v1h-1zM922 236h1v1h-1zM922 224h1v1h-1zM922 211h1v1h-1zM922 199h1v1h-1zM922 187h1v1h-1zM922 175h1v1h-1zM935 728h1v1h-1zM935 716h1v1h-1zM935 703h1v1h-1zM935 691h1v1h-1zM935 679h1v1h-1zM935 667h1v1h-1zM935 654h1v1h-1zM935 642h1v1h-1zM935 630h1v1h-1zM935 617h1v1h-1zM935 605h1v1h-1zM935 593h1v1h-1zM935 580h1v1h-1zM935 568h1v1h-1zM935 556h1v1h-1zM935 544h1v1h-1zM935 531h1v1h-1zM935 519h1v1h-1zM935 507h1v1h-1zM935 494h1v1h-1zM935 482h1v1h-1zM935 470h1v1h-1zM935 457h1v1h-1zM935 445h1v1h-1zM935 433h1v1h-1zM935 421h1v1h-1zM935 408h1v1h-1zM935 396h1v1h-1zM935 384h1v1h-1zM935 371h1v1h-1zM935 359h1v1h-1zM935 347h1v1h-1zM935 334h1v1h-1zM935 322h1v1h-1zM935 310h1v1h-1zM935 298h1v1h-1zM935 285h1v1h-1zM935 273h1v1h-1zM935 261h1v1h-1zM935 248h1v1h-1zM935 236h1v1h-1zM935 224h1v1h-1zM935 211h1v1h-1zM935 199h1v1h-1zM935 187h1v1h-1zM935 175h1v1h-1zM947 728h1v1h-1zM947 716h1v1h-1zM947 703h1v1h-1zM947 691h1v1h-1zM947 679h1v1h-1zM947 667h1v1h-1zM947 654h1v1h-1zM947 642h1v1h-1zM947 630h1v1h-1zM947 617h1v1h-1zM947 605h1v1h-1zM947 593h1v1h-1zM947 580h1v1h-1zM947 568h1v1h-1zM947 556h1v1h-1zM947 544h1v1h-1zM947 531h1v1h-1zM947 519h1v1h-1zM947 507h1v1h-1zM947 494h1v1h-1zM947 482h1v1h-1zM947 470h1v1h-1zM947 457h1v1h-1zM947 445h1v1h-1zM947 433h1v1h-1zM947 421h1v1h-1zM947 408h1v1h-1zM947 396h1v1h-1zM947 384h1v1h-1zM947 371h1v1h-1zM947 359h1v1h-1zM947 347h1v1h-1zM947 334h1v1h-1zM947 322h1v1h-1zM947 310h1v1h-1zM947 298h1v1h-1zM947 285h1v1h-1zM947 273h1v1h-1zM947 261h1v1h-1zM947 248h1v1h-1zM947 236h1v1h-1zM947 224h1v1h-1zM947 211h1v1h-1zM947 199h1v1h-1zM947 187h1v1h-1zM947 175h1v1h-1zM959 728h1v1h-1zM959 716h1v1h-1zM959 703h1v1h-1zM959 691h1v1h-1zM959 679h1v1h-1zM959 667h1v1h-1zM959 654h1v1h-1zM959 642h1v1h-1zM959 630h1v1h-1zM959 617h1v1h-1zM959 605h1v1h-1zM959 593h1v1h-1zM959 580h1v1h-1zM959 568h1v1h-1zM959 556h1v1h-1zM959 544h1v1h-1zM959 531h1v1h-1zM959 519h1v1h-1zM959 507h1v1h-1zM959 494h1v1h-1zM959 482h1v1h-1zM959 470h1v1h-1zM959 457h1v1h-1zM959 445h1v1h-1zM959 433h1v1h-1zM959 421h1v1h-1zM959 408h1v1h-1zM959 396h1v1h-1zM959 384h1v1h-1zM959 371h1v1h-1zM959 359h1v1h-1zM959 347h1v1h-1zM959 334h1v1h-1zM959 322h1v1h-1zM959 310h1v1h-1zM959 298h1v1h-1zM959 285h1v1h-1zM959 273h1v1h-1zM959 261h1v1h-1zM959 248h1v1h-1zM959 236h1v1h-1zM959 224h1v1h-1zM959 211h1v1h-1zM959 199h1v1h-1zM959 187h1v1h-1zM959 175h1v1h-1zM972 728h1v1h-1zM972 716h1v1h-1zM972 703h1v1h-1zM972 691h1v1h-1zM972 679h1v1h-1zM972 667h1v1h-1zM972 654h1v1h-1zM972 642h1v1h-1zM972 630h1v1h-1zM972 617h1v1h-1zM972 605h1v1h-1zM972 593h1v1h-1zM972 580h1v1h-1zM972 568h1v1h-1zM972 556h1v1h-1zM972 544h1v1h-1zM972 531h1v1h-1zM972 519h1v1h-1zM972 507h1v1h-1zM972 494h1v1h-1zM972 482h1v1h-1zM972 470h1v1h-1zM972 457h1v1h-1zM972 445h1v1h-1zM972 433h1v1h-1zM972 421h1v1h-1zM972 408h1v1h-1zM972 396h1v1h-1zM972 384h1v1h-1zM972 371h1v1h-1zM972 359h1v1h-1zM972 347h1v1h-1zM972 334h1v1h-1zM972 322h1v1h-1zM972 310h1v1h-1zM972 298h1v1h-1zM972 285h1v1h-1zM972 273h1v1h-1zM972 261h1v1h-1zM972 248h1v1h-1zM972 236h1v1h-1zM972 224h1v1h-1zM972 211h1v1h-1zM972 199h1v1h-1zM972 187h1v1h-1zM972 175h1v1h-1zM984 728h1v1h-1zM984 716h1v1h-1zM984 703h1v1h-1zM984 691h1v1h-1zM984 679h1v1h-1zM984 667h1v1h-1zM984 654h1v1h-1zM984 642h1v1h-1zM984 630h1v1h-1zM984 617h1v1h-1zM984 605h1v1h-1zM984 593h1v1h-1zM984 580h1v1h-1zM984 568h1v1h-1zM984 556h1v1h-1zM984 544h1v1h-1zM984 531h1v1h-1zM984 519h1v1h-1zM984 507h1v1h-1zM984 494h1v1h-1zM984 482h1v1h-1zM984 470h1v1h-1zM984 457h1v1h-1zM984 445h1v1h-1zM984 433h1v1h-1zM984 421h1v1h-1zM984 408h1v1h-1zM984 396h1v1h-1zM984 384h1v1h-1zM984 371h1v1h-1zM984 359h1v1h-1zM984 347h1v1h-1zM984 334h1v1h-1zM984 322h1v1h-1zM984 310h1v1h-1zM984 298h1v1h-1zM984 285h1v1h-1zM984 273h1v1h-1zM984 261h1v1h-1zM984 248h1v1h-1zM984 236h1v1h-1zM984 224h1v1h-1zM984 211h1v1h-1zM984 199h1v1h-1zM984 187h1v1h-1zM984 175h1v1h-1zM996 728h1v1h-1zM996 716h1v1h-1zM996 703h1v1h-1zM996 691h1v1h-1zM996 679h1v1h-1zM996 667h1v1h-1zM996 654h1v1h-1zM996 642h1v1h-1zM996 630h1v1h-1zM996 617h1v1h-1zM996 605h1v1h-1zM996 593h1v1h-1zM996 580h1v1h-1zM996 568h1v1h-1zM996 556h1v1h-1zM996 544h1v1h-1zM996 531h1v1h-1zM996 519h1v1h-1zM996 507h1v1h-1zM996 494h1v1h-1zM996 482h1v1h-1zM996 470h1v1h-1zM996 457h1v1h-1zM996 445h1v1h-1zM996 433h1v1h-1zM996 421h1v1h-1zM996 408h1v1h-1zM996 396h1v1h-1zM996 384h1v1h-1zM996 371h1v1h-1zM996 359h1v1h-1zM996 347h1v1h-1zM996 334h1v1h-1zM996 322h1v1h-1zM996 310h1v1h-1zM996 298h1v1h-1zM996 285h1v1h-1zM996 273h1v1h-1zM996 261h1v1h-1zM996 248h1v1h-1zM996 236h1v1h-1zM996 224h1v1h-1zM996 211h1v1h-1zM996 199h1v1h-1zM996 187h1v1h-1zM996 175h1v1h-1zM1008 728h1v1h-1zM1008 716h1v1h-1zM1008 703h1v1h-1zM1008 691h1v1h-1zM1008 679h1v1h-1zM1008 667h1v1h-1zM1008 654h1v1h-1zM1008 642h1v1h-1zM1008 630h1v1h-1zM1008 617h1v1h-1zM1008 605h1v1h-1zM1008 593h1v1h-1zM1008 580h1v1h-1zM1008 568h1v1h-1zM1008 556h1v1h-1zM1008 544h1v1h-1zM1008 531h1v1h-1zM1008 519h1v1h-1zM1008 507h1v1h-1zM1008 494h1v1h-1zM1008 482h1v1h-1zM1008 470h1v1h-1zM1008 457h1v1h-1zM1008 445h1v1h-1zM1008 433h1v1h-1zM1008 421h1v1h-1zM1008 408h1v1h-1zM1008 396h1v1h-1zM1008 384h1v1h-1zM1008 371h1v1h-1zM1008 359h1v1h-1zM1008 347h1v1h-1zM1008 334h1v1h-1zM1008 322h1v1h-1zM1008 310h1v1h-1zM1008 298h1v1h-1zM1008 285h1v1h-1zM1008 273h1v1h-1zM1008 261h1v1h-1zM1008 248h1v1h-1zM1008 236h1v1h-1zM1008 224h1v1h-1zM1008 211h1v1h-1zM1008 199h1v1h-1zM1008 187h1v1h-1zM1008 175h1v1h-1zM1021 728h1v1h-1zM1021 716h1v1h-1zM1021 703h1v1h-1zM1021 691h1v1h-1zM1021 679h1v1h-1zM1021 667h1v1h-1zM1021 654h1v1h-1zM1021 642h1v1h-1zM1021 630h1v1h-1zM1021 617h1v1h-1zM1021 605h1v1h-1zM1021 593h1v1h-1zM1021 580h1v1h-1zM1021 568h1v1h-1zM1021 556h1v1h-1zM1021 544h1v1h-1zM1021 531h1v1h-1zM1021 519h1v1h-1zM1021 507h1v1h-1zM1021 494h1v1h-1zM1021 482h1v1h-1zM1021 470h1v1h-1zM1021 457h1v1h-1zM1021 445h1v1h-1zM1021 433h1v1h-1zM1021 421h1v1h-1zM1021 408h1v1h-1zM1021 396h1v1h-1zM1021 384h1v1h-1zM1021 371h1v1h-1zM1021 359h1v1h-1zM1021 347h1v1h-1zM1021 334h1v1h-1zM1021 322h1v1h-1zM1021 310h1v1h-1zM1021 298h1v1h-1zM1021 285h1v1h-1zM1021 273h1v1h-1zM1021 261h1v1h-1zM1021 248h1v1h-1zM1021 236h1v1h-1zM1021 224h1v1h-1zM1021 211h1v1h-1zM1021 199h1v1h-1zM1021 187h1v1h-1zM1021 175h1v1h-1zM1033 728h1v1h-1zM1033 716h1v1h-1zM1033 703h1v1h-1zM1033 691h1v1h-1zM1033 679h1v1h-1zM1033 667h1v1h-1zM1033 654h1v1h-1zM1033 642h1v1h-1zM1033 630h1v1h-1zM1033 617h1v1h-1zM1033 605h1v1h-1zM1033 593h1v1h-1zM1033 580h1v1h-1zM1033 568h1v1h-1zM1033 556h1v1h-1zM1033 544h1v1h-1zM1033 531h1v1h-1zM1033 519h1v1h-1zM1033 507h1v1h-1zM1033 494h1v1h-1zM1033 482h1v1h-1zM1033 470h1v1h-1zM1033 457h1v1h-1zM1033 445h1v1h-1zM1033 433h1v1h-1zM1033 421h1v1h-1zM1033 408h1v1h-1zM1033 396h1v1h-1zM1033 384h1v1h-1zM1033 371h1v1h-1zM1033 359h1v1h-1zM1033 347h1v1h-1zM1033 334h1v1h-1zM1033 322h1v1h-1zM1033 310h1v1h-1zM1033 298h1v1h-1zM1033 285h1v1h-1zM1033 273h1v1h-1zM1033 261h1v1h-1zM1033 248h1v1h-1zM1033 236h1v1h-1zM1033 224h1v1h-1zM1033 211h1v1h-1zM1033 199h1v1h-1zM1033 187h1v1h-1zM1033 175h1v1h-1zM1045 728h1v1h-1zM1045 716h1v1h-1zM1045 703h1v1h-1zM1045 691h1v1h-1zM1045 679h1v1h-1zM1045 667h1v1h-1zM1045 654h1v1h-1zM1045 642h1v1h-1zM1045 630h1v1h-1zM1045 617h1v1h-1zM1045 605h1v1h-1zM1045 593h1v1h-1zM1045 580h1v1h-1zM1045 568h1v1h-1zM1045 556h1v1h-1zM1045 544h1v1h-1zM1045 531h1v1h-1zM1045 519h1v1h-1zM1045 507h1v1h-1zM1045 494h1v1h-1zM1045 482h1v1h-1zM1045 470h1v1h-1zM1045 457h1v1h-1zM1045 445h1v1h-1zM1045 433h1v1h-1zM1045 421h1v1h-1zM1045 408h1v1h-1zM1045 396h1v1h-1zM1045 384h1v1h-1zM1045 371h1v1h-1zM1045 359h1v1h-1zM1045 347h1v1h-1zM1045 334h1v1h-1zM1045 322h1v1h-1zM1045 310h1v1h-1zM1045 298h1v1h-1zM1045 285h1v1h-1zM1045 273h1v1h-1zM1045 261h1v1h-1zM1045 248h1v1h-1zM1045 236h1v1h-1zM1045 224h1v1h-1zM1045 211h1v1h-1zM1045 199h1v1h-1zM1045 187h1v1h-1zM1045 175h1v1h-1zM1058 728h1v1h-1zM1058 716h1v1h-1zM1058 703h1v1h-1zM1058 691h1v1h-1zM1058 679h1v1h-1zM1058 667h1v1h-1zM1058 654h1v1h-1zM1058 642h1v1h-1zM1058 630h1v1h-1zM1058 617h1v1h-1zM1058 605h1v1h-1zM1058 593h1v1h-1zM1058 580h1v1h-1zM1058 568h1v1h-1zM1058 556h1v1h-1zM1058 544h1v1h-1zM1058 531h1v1h-1zM1058 519h1v1h-1zM1058 507h1v1h-1zM1058 494h1v1h-1zM1058 482h1v1h-1zM1058 470h1v1h-1zM1058 457h1v1h-1zM1058 445h1v1h-1zM1058 433h1v1h-1zM1058 421h1v1h-1zM1058 408h1v1h-1zM1058 396h1v1h-1zM1058 384h1v1h-1zM1058 371h1v1h-1zM1058 359h1v1h-1zM1058 347h1v1h-1zM1058 334h1v1h-1zM1058 322h1v1h-1zM1058 310h1v1h-1zM1058 298h1v1h-1zM1058 285h1v1h-1zM1058 273h1v1h-1zM1058 261h1v1h-1zM1058 248h1v1h-1zM1058 236h1v1h-1zM1058 224h1v1h-1zM1058 211h1v1h-1zM1058 199h1v1h-1zM1058 187h1v1h-1zM1058 175h1v1h-1zM1070 728h1v1h-1zM1070 716h1v1h-1zM1070 703h1v1h-1zM1070 691h1v1h-1zM1070 679h1v1h-1zM1070 667h1v1h-1zM1070 654h1v1h-1zM1070 642h1v1h-1zM1070 630h1v1h-1zM1070 617h1v1h-1zM1070 605h1v1h-1zM1070 593h1v1h-1zM1070 580h1v1h-1zM1070 568h1v1h-1zM1070 556h1v1h-1zM1070 544h1v1h-1zM1070 531h1v1h-1zM1070 519h1v1h-1zM1070 507h1v1h-1zM1070 494h1v1h-1zM1070 482h1v1h-1zM1070 470h1v1h-1zM1070 457h1v1h-1zM1070 445h1v1h-1zM1070 433h1v1h-1zM1070 421h1v1h-1zM1070 408h1v1h-1zM1070 396h1v1h-1zM1070 384h1v1h-1zM1070 371h1v1h-1zM1070 359h1v1h-1zM1070 347h1v1h-1zM1070 334h1v1h-1zM1070 322h1v1h-1zM1070 310h1v1h-1zM1070 298h1v1h-1zM1070 285h1v1h-1zM1070 273h1v1h-1zM1070 261h1v1h-1zM1070 248h1v1h-1zM1070 236h1v1h-1zM1070 224h1v1h-1zM1070 211h1v1h-1zM1070 199h1v1h-1zM1070 187h1v1h-1zM1070 175h1v1h-1zM1082 728h1v1h-1zM1082 716h1v1h-1zM1082 703h1v1h-1zM1082 691h1v1h-1zM1082 679h1v1h-1zM1082 667h1v1h-1zM1082 654h1v1h-1zM1082 642h1v1h-1zM1082 630h1v1h-1zM1082 617h1v1h-1zM1082 605h1v1h-1zM1082 593h1v1h-1zM1082 580h1v1h-1zM1082 568h1v1h-1zM1082 556h1v1h-1zM1082 544h1v1h-1zM1082 531h1v1h-1zM1082 519h1v1h-1zM1082 507h1v1h-1zM1082 494h1v1h-1zM1082 482h1v1h-1zM1082 470h1v1h-1zM1082 457h1v1h-1zM1082 445h1v1h-1zM1082 433h1v1h-1zM1082 421h1v1h-1zM1082 408h1v1h-1zM1082 396h1v1h-1zM1082 384h1v1h-1zM1082 371h1v1h-1zM1082 359h1v1h-1zM1082 347h1v1h-1zM1082 334h1v1h-1zM1082 322h1v1h-1zM1082 310h1v1h-1zM1082 298h1v1h-1zM1082 285h1v1h-1zM1082 273h1v1h-1zM1082 261h1v1h-1zM1082 248h1v1h-1zM1082 236h1v1h-1zM1082 224h1v1h-1zM1082 211h1v1h-1zM1082 199h1v1h-1zM1082 187h1v1h-1zM1082 175h1v1h-1zM1095 728h1v1h-1zM1095 716h1v1h-1zM1095 703h1v1h-1zM1095 691h1v1h-1zM1095 679h1v1h-1zM1095 667h1v1h-1zM1095 654h1v1h-1zM1095 642h1v1h-1zM1095 630h1v1h-1zM1095 617h1v1h-1zM1095 605h1v1h-1zM1095 593h1v1h-1zM1095 580h1v1h-1zM1095 568h1v1h-1zM1095 556h1v1h-1zM1095 544h1v1h-1zM1095 531h1v1h-1zM1095 519h1v1h-1zM1095 507h1v1h-1zM1095 494h1v1h-1zM1095 482h1v1h-1zM1095 470h1v1h-1zM1095 457h1v1h-1zM1095 445h1v1h-1zM1095 433h1v1h-1zM1095 421h1v1h-1zM1095 408h1v1h-1zM1095 396h1v1h-1zM1095 384h1v1h-1zM1095 371h1v1h-1zM1095 359h1v1h-1zM1095 347h1v1h-1zM1095 334h1v1h-1zM1095 322h1v1h-1zM1095 310h1v1h-1zM1095 298h1v1h-1zM1095 285h1v1h-1zM1095 273h1v1h-1zM1095 261h1v1h-1zM1095 248h1v1h-1zM1095 236h1v1h-1zM1095 224h1v1h-1zM1095 211h1v1h-1zM1095 199h1v1h-1zM1095 187h1v1h-1zM1095 175h1v1h-1zM1107 728h1v1h-1zM1107 716h1v1h-1zM1107 703h1v1h-1zM1107 691h1v1h-1zM1107 679h1v1h-1zM1107 667h1v1h-1zM1107 654h1v1h-1zM1107 642h1v1h-1zM1107 630h1v1h-1zM1107 617h1v1h-1zM1107 605h1v1h-1zM1107 593h1v1h-1zM1107 580h1v1h-1zM1107 568h1v1h-1zM1107 556h1v1h-1zM1107 544h1v1h-1zM1107 531h1v1h-1zM1107 519h1v1h-1zM1107 507h1v1h-1zM1107 494h1v1h-1zM1107 482h1v1h-1zM1107 470h1v1h-1zM1107 457h1v1h-1zM1107 445h1v1h-1zM1107 433h1v1h-1zM1107 421h1v1h-1zM1107 408h1v1h-1zM1107 396h1v1h-1zM1107 384h1v1h-1zM1107 371h1v1h-1zM1107 359h1v1h-1zM1107 347h1v1h-1zM1107 334h1v1h-1zM1107 322h1v1h-1zM1107 310h1v1h-1zM1107 298h1v1h-1zM1107 285h1v1h-1zM1107 273h1v1h-1zM1107 261h1v1h-1zM1107 248h1v1h-1zM1107 236h1v1h-1zM1107 224h1v1h-1zM1107 211h1v1h-1zM1107 199h1v1h-1zM1107 187h1v1h-1zM1107 175h1v1h-1zM1119 728h1v1h-1zM1119 716h1v1h-1zM1119 703h1v1h-1zM1119 691h1v1h-1zM1119 679h1v1h-1zM1119 667h1v1h-1zM1119 654h1v1h-1zM1119 642h1v1h-1zM1119 630h1v1h-1zM1119 617h1v1h-1zM1119 605h1v1h-1zM1119 593h1v1h-1zM1119 580h1v1h-1zM1119 568h1v1h-1zM1119 556h1v1h-1zM1119 544h1v1h-1zM1119 531h1v1h-1zM1119 519h1v1h-1zM1119 507h1v1h-1zM1119 494h1v1h-1zM1119 482h1v1h-1zM1119 470h1v1h-1zM1119 457h1v1h-1zM1119 445h1v1h-1zM1119 433h1v1h-1zM1119 421h1v1h-1zM1119 408h1v1h-1zM1119 396h1v1h-1zM1119 384h1v1h-1zM1119 371h1v1h-1zM1119 359h1v1h-1zM1119 347h1v1h-1zM1119 334h1v1h-1zM1119 322h1v1h-1zM1119 310h1v1h-1zM1119 298h1v1h-1zM1119 285h1v1h-1zM1119 273h1v1h-1zM1119 261h1v1h-1zM1119 248h1v1h-1zM1119 236h1v1h-1zM1119 224h1v1h-1zM1119 211h1v1h-1zM1119 199h1v1h-1zM1119 187h1v1h-1zM1119 175h1v1h-1zM1131 728h1v1h-1zM1131 716h1v1h-1zM1131 703h1v1h-1zM1131 691h1v1h-1zM1131 679h1v1h-1zM1131 667h1v1h-1zM1131 654h1v1h-1zM1131 642h1v1h-1zM1131 630h1v1h-1zM1131 617h1v1h-1zM1131 605h1v1h-1zM1131 593h1v1h-1zM1131 580h1v1h-1zM1131 568h1v1h-1zM1131 556h1v1h-1zM1131 544h1v1h-1zM1131 531h1v1h-1zM1131 519h1v1h-1zM1131 507h1v1h-1zM1131 494h1v1h-1zM1131 482h1v1h-1zM1131 470h1v1h-1zM1131 457h1v1h-1zM1131 445h1v1h-1zM1131 433h1v1h-1zM1131 421h1v1h-1zM1131 408h1v1h-1zM1131 396h1v1h-1zM1131 384h1v1h-1zM1131 371h1v1h-1zM1131 359h1v1h-1zM1131 347h1v1h-1zM1131 334h1v1h-1zM1131 322h1v1h-1zM1131 310h1v1h-1zM1131 298h1v1h-1zM1131 285h1v1h-1zM1131 273h1v1h-1zM1131 261h1v1h-1zM1131 248h1v1h-1zM1131 236h1v1h-1zM1131 224h1v1h-1zM1131 211h1v1h-1zM1131 199h1v1h-1zM1131 187h1v1h-1zM1131 175h1v1h-1z" fill="#3c3c3c"/>
<circle cx="578" cy="470" r="40" fill="url(#ring)"/>
<g transform="translate(591.00 443.00) rotate(0.00) scale(0.2620) translate(0 -100)" fill="none" stroke="#ff8c00" stroke-width="9.92" stroke-linecap="butt" stroke-linejoin="round"><path transform="translate(0.00 0)" d="M59.5 4.5 H4.5 V44 H36.5 A23 23 0 0 1 59.5 67 V72.5 A23 23 0 0 1 36.5 95.5 H4.5"/><path transform="translate(79.00 0)" d="M4.5 4.5 H36.5 A23 23 0 0 1 59.5 27.5 V36 Q59.5 44 52.5 50 L4.5 95.5 H60.5"/><path transform="translate(158.00 0)" d="M59.5 4.5 H4.5 V44 H36.5 A23 23 0 0 1 59.5 67 V72.5 A23 23 0 0 1 36.5 95.5 H4.5"/><path transform="translate(237.00 0)" d="M59.5 4.5 H27.5 A23 23 0 0 0 4.5 27.5 V72.5 A23 23 0 0 0 27.5 95.5 H36.5 A23 23 0 0 0 59.5 72.5 V73 A23 23 0 0 0 36.5 50 H4.5"/><path transform="translate(316.00 0)" d="M4.5 4.5 H36.5 A23 23 0 0 1 59.5 27.5 V36 A14 14 0 0 1 45.5 50 H18 M45.5 50 A14 14 0 0 1 59.5 64 V72.5 A23 23 0 0 1 36.5 95.5 H4.5"/><path transform="translate(395.00 0)" d="M59.5 4.5 H27.5 A23 23 0 0 0 4.5 27.5 V72.5 A23 23 0 0 0 27.5 95.5 H36.5 A23 23 0 0 0 59.5 72.5 V73 A23 23 0 0 0 36.5 50 H4.5"/><path transform="translate(474.00 0)" d="M4.5 95.5 H36.5 A23 23 0 0 0 59.5 72.5 V27.5 A23 23 0 0 0 36.5 4.5 H27.5 A23 23 0 0 0 4.5 27.5 V27 A23 23 0 0 0 27.5 50 H59.5"/><path transform="translate(553.00 0)" d="M4.5 4.5 H36.5 A23 23 0 0 1 59.5 27.5 V36 Q59.5 44 52.5 50 L4.5 95.5 H60.5"/></g>
<g transform="translate(947.50 511.00) rotate(0.00) scale(0.2630) translate(0 -100)" fill="none" stroke="#f2f200" stroke-width="9.89" stroke-linecap="butt" stroke-linejoin="round"><path transform="translate(0.00 0)" d="M3 22 L31 4.5 V95.5"/><path transform="translate(50.00 0)" d="M59.5 4.5 H27.5 A23 23 0 0 0 4.5 27.5 V72.5 A23 23 0 0 0 27.5 95.5 H36.5 A23 23 0 0 0 59.5 72.5 V73 A23 23 0 0 0 36.5 50 H4.5"/><path transform="translate(130.00 0)" d="M3 22 L31 4.5 V95.5"/><path transform="translate(180.00 0)" d="M4.5 4.5 H36.5 A23 23 0 0 1 59.5 27.5 V36 Q59.5 44 52.5 50 L4.5 95.5 H60.5"/></g>
<g transform="translate(785.00 464.50) rotate(-12.50) scale(0.2650) translate(0 -100)" fill="none" stroke="#f2f200" stroke-width="9.81" stroke-linecap="butt" stroke-linejoin="round"><path transform="translate(0.00 0)" d="M30 4.5 L5 78 H68 M45 50 L52 99"/><path transform="translate(80.00 0)" d="M4.5 4.5 H36.5 A23 23 0 0 1 59.5 27.5 V36 A14 14 0 0 1 45.5 50 H18 M45.5 50 A14 14 0 0 1 59.5 64 V72.5 A23 23 0 0 1 36.5 95.5 H4.5"/><path transform="translate(160.00 0)" d="M59.5 4.5 H4.5 V44 H36.5 A23 23 0 0 1 59.5 67 V72.5 A23 23 0 0 1 36.5 95.5 H4.5"/><path transform="translate(240.00 0)" d="M27.5 4.5 H36.5 A23 23 0 0 1 59.5 27.5 V72.5 A23 23 0 0 1 36.5 95.5 H27.5 A23 23 0 0 1 4.5 72.5 V27.5 A23 23 0 0 1 27.5 4.5 Z"/><path transform="translate(320.00 0)" d="M59.5 4.5 H4.5 V44 H36.5 A23 23 0 0 1 59.5 67 V72.5 A23 23 0 0 1 36.5 95.5 H4.5"/></g>
<g transform="translate(992.50 413.00) rotate(-13.00) scale(0.3060) translate(0 -100)" fill="none" stroke="#c8c8c8" stroke-width="8.50" stroke-linecap="butt" stroke-linejoin="round"><path transform="translate(0.00 0)" d="M0 100 L8 0 L45 99 L86 0 L93 100"/><path transform="translate(117.00 0)" d="M2 28 H37 A16 16 0 0 1 53 44 V100 H16 A16 16 0 0 1 0 84 V82 A16 16 0 0 1 16 66 H53"/><path transform="translate(194.00 0)" d="M53 28 H16 A16 16 0 0 0 0 44 V84 A16 16 0 0 0 16 100 H53 M53 28 V110 A16 16 0 0 1 37 126 H6"/><path transform="translate(271.00 0)" d="M0 100 V28 H37 A16 16 0 0 1 53 44 V100"/><path transform="translate(348.00 0)" d="M2 28 H37 A16 16 0 0 1 53 44 V100 H16 A16 16 0 0 1 0 84 V82 A16 16 0 0 1 16 66 H53"/><path transform="translate(425.00 0)" d=""/><path transform="translate(479.00 0)" d="M0 100 L32 0 H40 L72 100 M12 68 H60"/></g>
<path d="M1121.8 572 L1118.6 603.3 L1134.5 605.2" stroke="#c8c8c8" stroke-width="2.6" fill="none" stroke-linejoin="round"/>
<path d="M129.8 170.0 L118.9 260.5 L95.0 257.9 M114.4 260.5 L110.6 293.2 L95.0 291.8 M154.5 170.0 L138.6 302.0 L95.0 297.0 M548.7 170.0 L543.3 209.3 L537.3 262.9 L546.1 264.5 L539.5 318.6 L635.7 329.5 L636.6 321.4 L717.9 330.9 L737.3 170.0 M737.0 170.9 L761.8 173.3 L800.4 176.0 M761.8 173.3 L760.6 170.0 M732.1 214.8 L749.9 216.7 L731.0 371.6 L456.1 339.2 M438.3 337.1 L157.5 304.1 L173.4 170.0 M734.5 190.6 L798.6 197.4 M797.9 170.0 L789.8 248.6 L792.8 248.6 L801.7 170.0 M432.9 170.0 L432.0 179.7 L440.0 180.4 M432.0 179.7 L456.5 182.3 L438.3 337.3 M432.9 170.0 L418.2 295.6 L337.2 286.6 L336.4 294.9 L240.0 283.5 L246.4 229.5 L238.1 228.3 L244.0 174.5 L216.8 171.4 L203.7 274.2 L240.0 278.3 M310.4 292.3 L308.0 316.7 L410.4 328.5 L413.9 295.6 M501.0 170.0 L497.5 199.8 L473.8 197.0 L456.1 339.2 M515.3 206.0 L543.3 209.3 M515.3 206.0 L503.5 308.8 L539.5 313.6 M610.1 327.3 L607.3 351.7 L709.6 363.6 L713.2 330.9 M866.3 170.0 L856.1 255.0 L890.3 259.5 L879.4 349.9 M869.6 170.0 L859.2 252.4 L873.9 254.2 L873.4 256.2 M983.6 170.0 L972.7 267.1 L1129.8 288.6 L1124.7 314.5 M1107.0 170.0 L1139.0 173.1 M95.0 320.2 L747.5 401.2 M95.0 464.5 L180.0 469.5 L190.7 530.8 M95.0 578.5 L1139.0 334.5 M343.6 621.3 L497.5 639.5 L499.4 619.4 L549.7 624.6 L540.2 704.2 L494.0 699.5 L490.4 731.8 M466.7 615.4 L499.4 619.4 M466.7 615.4 L465.1 634.8 M343.6 621.3 L330.5 731.8 M426.5 563.7 L449.7 633.1 M492.8 717.7 L581.7 728.4 M599.0 552.3 L1139.0 610.9 M757.0 617.0 L636.2 603.5 L627.9 682.2 L677.6 688.1 L672.9 731.8 M757.0 617.0 L751.1 654.9 M700.1 611.1 L696.6 649.0 L813.6 662.9 L808.0 712.3 L793.3 710.5 L790.3 731.8 M718.6 565.6 L713.2 611.1 M778.3 572.0 L766.5 656.1 M849.8 580.5 L852.3 602.1 L956.2 615.2 L946.6 700.9 L906.1 696.6 L902.3 731.8 M949.9 673.0 L985.9 677.6 L982.8 705.2 L1094.3 716.6 M1024.6 709.2 L1022.1 731.8 M1104.9 624.4 L1114.6 625.6 L1105.7 714.3 L1139.0 717.4" stroke="#d4d4d4" stroke-width="1" fill="none" stroke-linejoin="miter"/>
<path d="M879.4 349.9 C878 360 882 366 889.8 368.2" stroke="#d4d4d4" stroke-width="1" fill="none"/>
<path d="M95.0 329.7 L747.5 401.2 M95.0 553.6 L1139.0 310.2 M711.5 497.7 L1139.0 398.6 M138.6 631.2 L517.7 542.9 L599.0 551.7 L602.3 523.2 L631.0 516.8 L713.2 524.9 L853.6 541.3 L1110.0 568.4 L1139.0 571.7 M599.0 551.7 L581.7 731.8 M853.6 541.3 L835.4 731.8 M1110.0 568.4 L1093.8 731.8 M913.7 170.0 L889.8 368.2 M95 649.5 Q112 638 138.6 631.2 M711.5 497.7 C697 503 697 520 713.2 524.9" stroke="#24dde6" stroke-width="1.05" fill="none"/>
<g fill="none" stroke="#9a9a9a" stroke-width="1"><circle cx="747.5" cy="401.2" r="2.6"/><circle cx="889.8" cy="368.2" r="2.6"/><circle cx="711.5" cy="497.7" r="2.6"/><circle cx="713.2" cy="524.9" r="2.6"/><circle cx="631.0" cy="516.8" r="2.6"/><circle cx="602.3" cy="523.2" r="2.6"/><circle cx="517.7" cy="542.9" r="2.6"/><circle cx="599.0" cy="551.7" r="2.6"/><circle cx="138.6" cy="631.2" r="2.6"/><circle cx="853.6" cy="541.3" r="2.6"/><circle cx="1110.0" cy="568.4" r="2.6"/></g>
</g>
<circle cx="577" cy="464.5" r="6" fill="none" stroke="#9a9a9a" stroke-width="1"/>
<path d="M577.4 469.2 L577.8 492 L583 487.3 L587 496.6 L591.2 494.7 L587.3 485.7 L594.3 485.5 Z" fill="#fff" stroke="#e8e8e8" stroke-width="3.6" stroke-linejoin="round"/><path d="M577.4 469.2 L577.8 492 L583 487.3 L587 496.6 L591.2 494.7 L587.3 485.7 L594.3 485.5 Z" fill="#fff" stroke="#000" stroke-width="1.2" stroke-linejoin="round"/>
</svg><svg class="a" style="left:0;top:0" width="1500" height="844"><path d="M99.5 167V170M111.5 163V170M124.5 167V170M136.5 163V170M148.5 167V170M160.5 163V170M173.5 167V170M185.5 163V170M197.5 167V170M210.5 163V170M222.5 167V170M234.5 163V170M247.5 167V170M259.5 163V170M271.5 167V170M283.5 163V170M296.5 167V170M308.5 163V170M320.5 167V170M333.5 163V170M345.5 167V170M357.5 163V170M369.5 167V170M382.5 163V170M394.5 167V170M406.5 163V170M419.5 167V170M431.5 163V170M443.5 167V170M455.5 163V170M468.5 167V170M480.5 163V170M492.5 167V170M505.5 163V170M517.5 167V170M529.5 163V170M541.5 167V170M554.5 163V170M566.5 167V170M578.5 163V170M591.5 167V170M603.5 163V170M615.5 167V170M628.5 163V170M640.5 167V170M652.5 163V170M664.5 167V170M677.5 163V170M689.5 167V170M701.5 163V170M714.5 167V170M726.5 163V170M738.5 167V170M750.5 163V170M763.5 167V170M775.5 163V170M787.5 167V170M800.5 163V170M812.5 167V170M824.5 163V170M836.5 167V170M849.5 163V170M861.5 167V170M873.5 163V170M886.5 167V170M898.5 163V170M910.5 167V170M922.5 163V170M935.5 167V170M947.5 163V170M959.5 167V170M972.5 163V170M984.5 167V170M996.5 163V170M1008.5 167V170M1021.5 163V170M1033.5 167V170M1045.5 163V170M1058.5 167V170M1070.5 163V170M1082.5 167V170M1095.5 163V170M1107.5 167V170M1119.5 163V170M1131.5 167V170M91 728.5H95M88 716.5H95M91 703.5H95M88 691.5H95M91 679.5H95M88 667.5H95M91 654.5H95M88 642.5H95M91 630.5H95M88 617.5H95M91 605.5H95M88 593.5H95M91 580.5H95M88 568.5H95M91 556.5H95M88 544.5H95M91 531.5H95M88 519.5H95M91 507.5H95M88 494.5H95M91 482.5H95M88 470.5H95M91 457.5H95M88 445.5H95M91 433.5H95M88 421.5H95M91 408.5H95M88 396.5H95M91 384.5H95M88 371.5H95M91 359.5H95M88 347.5H95M91 334.5H95M88 322.5H95M91 310.5H95M88 298.5H95M91 285.5H95M88 273.5H95M91 261.5H95M88 248.5H95M91 236.5H95M88 224.5H95M91 211.5H95M88 199.5H95M91 187.5H95M88 175.5H95" stroke="#707070" stroke-width="1" fill="none"/></svg>
<div class="a" style="left:95px;top:147px;width:1044px;height:16px;overflow:hidden">
<div class="t" style="left:16.8px;top:0px;width:30px;margin-left:-15px;text-align:center;font-size:9.5px;color:#222;transform:scaleX(0.92)">198</div>
<div class="t" style="left:41.4px;top:0px;width:30px;margin-left:-15px;text-align:center;font-size:9.5px;color:#222;transform:scaleX(0.92)">200</div>
<div class="t" style="left:66.0px;top:0px;width:30px;margin-left:-15px;text-align:center;font-size:9.5px;color:#222;transform:scaleX(0.92)">202</div>
<div class="t" style="left:90.6px;top:0px;width:30px;margin-left:-15px;text-align:center;font-size:9.5px;color:#222;transform:scaleX(0.92)">204</div>
<div class="t" style="left:115.1px;top:0px;width:30px;margin-left:-15px;text-align:center;font-size:9.5px;color:#222;transform:scaleX(0.92)">206</div>
<div class="t" style="left:139.7px;top:0px;width:30px;margin-left:-15px;text-align:center;font-size:9.5px;color:#222;transform:scaleX(0.92)">208</div>
<div class="t" style="left:164.3px;top:0px;width:30px;margin-left:-15px;text-align:center;font-size:9.5px;color:#222;transform:scaleX(0.92)">210</div>
<div class="t" style="left:188.9px;top:0px;width:30px;margin-left:-15px;text-align:center;font-size:9.5px;color:#222;transform:scaleX(0.92)">212</div>
<div class="t" style="left:213.5px;top:0px;width:30px;margin-left:-15px;text-align:center;font-size:9.5px;color:#222;transform:scaleX(0.92)">214</div>
<div class="t" style="left:238.0px;top:0px;width:30px;margin-left:-15px;text-align:center;font-size:9.5px;color:#222;transform:scaleX(0.92)">216</div>
<div class="t" style="left:262.6px;top:0px;width:30px;margin-left:-15px;text-align:center;font-size:9.5px;color:#222;transform:scaleX(0.92)">218</div>
<div class="t" style="left:287.2px;top:0px;width:30px;margin-left:-15px;text-align:center;font-size:9.5px;color:#222;transform:scaleX(0.92)">220</div>
<div class="t" style="left:311.8px;top:0px;width:30px;margin-left:-15px;text-align:center;font-size:9.5px;color:#222;transform:scaleX(0.92)">222</div>
<div class="t" style="left:336.4px;top:0px;width:30px;margin-left:-15px;text-align:center;font-size:9.5px;color:#222;transform:scaleX(0.92)">224</div>
<div class="t" style="left:360.9px;top:0px;width:30px;margin-left:-15px;text-align:center;font-size:9.5px;color:#222;transform:scaleX(0.92)">226</div>
<div class="t" style="left:385.5px;top:0px;width:30px;margin-left:-15px;text-align:center;font-size:9.5px;color:#222;transform:scaleX(0.92)">228</div>
<div class="t" style="left:410.1px;top:0px;width:30px;margin-left:-15px;text-align:center;font-size:9.5px;color:#222;transform:scaleX(0.92)">230</div>
<div class="t" style="left:434.7px;top:0px;width:30px;margin-left:-15px;text-align:center;font-size:9.5px;color:#222;transform:scaleX(0.92)">232</div>
<div class="t" style="left:459.3px;top:0px;width:30px;margin-left:-15px;text-align:center;font-size:9.5px;color:#222;transform:scaleX(0.92)">234</div>
<div class="t" style="left:483.8px;top:0px;width:30px;margin-left:-15px;text-align:center;font-size:9.5px;color:#222;transform:scaleX(0.92)">236</div>
<div class="t" style="left:508.4px;top:0px;width:30px;margin-left:-15px;text-align:center;font-size:9.5px;color:#222;transform:scaleX(0.92)">238</div>
<div class="t" style="left:533.0px;top:0px;width:30px;margin-left:-15px;text-align:center;font-size:9.5px;color:#222;transform:scaleX(0.92)">240</div>
<div class="t" style="left:557.6px;top:0px;width:30px;margin-left:-15px;text-align:center;font-size:9.5px;color:#222;transform:scaleX(0.92)">242</div>
<div class="t" style="left:582.2px;top:0px;width:30px;margin-left:-15px;text-align:center;font-size:9.5px;color:#222;transform:scaleX(0.92)">244</div>
<div class="t" style="left:606.7px;top:0px;width:30px;margin-left:-15px;text-align:center;font-size:9.5px;color:#222;transform:scaleX(0.92)">246</div>
<div class="t" style="left:631.3px;top:0px;width:30px;margin-left:-15px;text-align:center;font-size:9.5px;color:#222;transform:scaleX(0.92)">248</div>
<div class="t" style="left:655.9px;top:0px;width:30px;margin-left:-15px;text-align:center;font-size:9.5px;color:#222;transform:scaleX(0.92)">250</div>
<div class="t" style="left:680.5px;top:0px;width:30px;margin-left:-15px;text-align:center;font-size:9.5px;color:#222;transform:scaleX(0.92)">252</div>
<div class="t" style="left:705.1px;top:0px;width:30px;margin-left:-15px;text-align:center;font-size:9.5px;color:#222;transform:scaleX(0.92)">254</div>
<div class="t" style="left:729.6px;top:0px;width:30px;margin-left:-15px;text-align:center;font-size:9.5px;color:#222;transform:scaleX(0.92)">256</div>
<div class="t" style="left:754.2px;top:0px;width:30px;margin-left:-15px;text-align:center;font-size:9.5px;color:#222;transform:scaleX(0.92)">258</div>
<div class="t" style="left:778.8px;top:0px;width:30px;margin-left:-15px;text-align:center;font-size:9.5px;color:#222;transform:scaleX(0.92)">260</div>
<div class="t" style="left:803.4px;top:0px;width:30px;margin-left:-15px;text-align:center;font-size:9.5px;color:#222;transform:scaleX(0.92)">262</div>
<div class="t" style="left:828.0px;top:0px;width:30px;margin-left:-15px;text-align:center;font-size:9.5px;color:#222;transform:scaleX(0.92)">264</div>
<div class="t" style="left:852.5px;top:0px;width:30px;margin-left:-15px;text-align:center;font-size:9.5px;color:#222;transform:scaleX(0.92)">266</div>
<div class="t" style="left:877.1px;top:0px;width:30px;margin-left:-15px;text-align:center;font-size:9.5px;color:#222;transform:scaleX(0.92)">268</div>
<div class="t" style="left:901.7px;top:0px;width:30px;margin-left:-15px;text-align:center;font-size:9.5px;color:#222;transform:scaleX(0.92)">270</div>
<div class="t" style="left:926.3px;top:0px;width:30px;margin-left:-15px;text-align:center;font-size:9.5px;color:#222;transform:scaleX(0.92)">272</div>
<div class="t" style="left:950.9px;top:0px;width:30px;margin-left:-15px;text-align:center;font-size:9.5px;color:#222;transform:scaleX(0.92)">274</div>
<div class="t" style="left:975.4px;top:0px;width:30px;margin-left:-15px;text-align:center;font-size:9.5px;color:#222;transform:scaleX(0.92)">276</div>
<div class="t" style="left:1000.0px;top:0px;width:30px;margin-left:-15px;text-align:center;font-size:9.5px;color:#222;transform:scaleX(0.92)">278</div>
<div class="t" style="left:1024.6px;top:0px;width:30px;margin-left:-15px;text-align:center;font-size:9.5px;color:#222;transform:scaleX(0.92)">280</div>
</div>
<div class="a" style="left:72px;top:170px;width:16px;height:562px;overflow:hidden">
<div class="t" style="left:6px;top:570.8px;width:30px;margin-left:-15px;text-align:center;font-size:9.5px;color:#222;transform:rotate(-90deg) scaleX(0.92);transform-origin:15px 5px;margin-top:-5px">158</div>
<div class="t" style="left:6px;top:546.2px;width:30px;margin-left:-15px;text-align:center;font-size:9.5px;color:#222;transform:rotate(-90deg) scaleX(0.92);transform-origin:15px 5px;margin-top:-5px">160</div>
<div class="t" style="left:6px;top:521.6px;width:30px;margin-left:-15px;text-align:center;font-size:9.5px;color:#222;transform:rotate(-90deg) scaleX(0.92);transform-origin:15px 5px;margin-top:-5px">162</div>
<div class="t" style="left:6px;top:497.0px;width:30px;margin-left:-15px;text-align:center;font-size:9.5px;color:#222;transform:rotate(-90deg) scaleX(0.92);transform-origin:15px 5px;margin-top:-5px">164</div>
<div class="t" style="left:6px;top:472.4px;width:30px;margin-left:-15px;text-align:center;font-size:9.5px;color:#222;transform:rotate(-90deg) scaleX(0.92);transform-origin:15px 5px;margin-top:-5px">166</div>
<div class="t" style="left:6px;top:447.8px;width:30px;margin-left:-15px;text-align:center;font-size:9.5px;color:#222;transform:rotate(-90deg) scaleX(0.92);transform-origin:15px 5px;margin-top:-5px">168</div>
<div class="t" style="left:6px;top:423.2px;width:30px;margin-left:-15px;text-align:center;font-size:9.5px;color:#222;transform:rotate(-90deg) scaleX(0.92);transform-origin:15px 5px;margin-top:-5px">170</div>
<div class="t" style="left:6px;top:398.6px;width:30px;margin-left:-15px;text-align:center;font-size:9.5px;color:#222;transform:rotate(-90deg) scaleX(0.92);transform-origin:15px 5px;margin-top:-5px">172</div>
<div class="t" style="left:6px;top:374.0px;width:30px;margin-left:-15px;text-align:center;font-size:9.5px;color:#222;transform:rotate(-90deg) scaleX(0.92);transform-origin:15px 5px;margin-top:-5px">174</div>
<div class="t" style="left:6px;top:349.4px;width:30px;margin-left:-15px;text-align:center;font-size:9.5px;color:#222;transform:rotate(-90deg) scaleX(0.92);transform-origin:15px 5px;margin-top:-5px">176</div>
<div class="t" style="left:6px;top:324.8px;width:30px;margin-left:-15px;text-align:center;font-size:9.5px;color:#222;transform:rotate(-90deg) scaleX(0.92);transform-origin:15px 5px;margin-top:-5px">178</div>
<div class="t" style="left:6px;top:300.2px;width:30px;margin-left:-15px;text-align:center;font-size:9.5px;color:#222;transform:rotate(-90deg) scaleX(0.92);transform-origin:15px 5px;margin-top:-5px">180</div>
<div class="t" style="left:6px;top:275.6px;width:30px;margin-left:-15px;text-align:center;font-size:9.5px;color:#222;transform:rotate(-90deg) scaleX(0.92);transform-origin:15px 5px;margin-top:-5px">182</div>
<div class="t" style="left:6px;top:251.0px;width:30px;margin-left:-15px;text-align:center;font-size:9.5px;color:#222;transform:rotate(-90deg) scaleX(0.92);transform-origin:15px 5px;margin-top:-5px">184</div>
<div class="t" style="left:6px;top:226.4px;width:30px;margin-left:-15px;text-align:center;font-size:9.5px;color:#222;transform:rotate(-90deg) scaleX(0.92);transform-origin:15px 5px;margin-top:-5px">186</div>
<div class="t" style="left:6px;top:201.8px;width:30px;margin-left:-15px;text-align:center;font-size:9.5px;color:#222;transform:rotate(-90deg) scaleX(0.92);transform-origin:15px 5px;margin-top:-5px">188</div>
<div class="t" style="left:6px;top:177.2px;width:30px;margin-left:-15px;text-align:center;font-size:9.5px;color:#222;transform:rotate(-90deg) scaleX(0.92);transform-origin:15px 5px;margin-top:-5px">190</div>
<div class="t" style="left:6px;top:152.6px;width:30px;margin-left:-15px;text-align:center;font-size:9.5px;color:#222;transform:rotate(-90deg) scaleX(0.92);transform-origin:15px 5px;margin-top:-5px">192</div>
<div class="t" style="left:6px;top:128.0px;width:30px;margin-left:-15px;text-align:center;font-size:9.5px;color:#222;transform:rotate(-90deg) scaleX(0.92);transform-origin:15px 5px;margin-top:-5px">194</div>
<div class="t" style="left:6px;top:103.4px;width:30px;margin-left:-15px;text-align:center;font-size:9.5px;color:#222;transform:rotate(-90deg) scaleX(0.92);transform-origin:15px 5px;margin-top:-5px">196</div>
<div class="t" style="left:6px;top:78.8px;width:30px;margin-left:-15px;text-align:center;font-size:9.5px;color:#222;transform:rotate(-90deg) scaleX(0.92);transform-origin:15px 5px;margin-top:-5px">198</div>
<div class="t" style="left:6px;top:54.2px;width:30px;margin-left:-15px;text-align:center;font-size:9.5px;color:#222;transform:rotate(-90deg) scaleX(0.92);transform-origin:15px 5px;margin-top:-5px">200</div>
<div class="t" style="left:6px;top:29.6px;width:30px;margin-left:-15px;text-align:center;font-size:9.5px;color:#222;transform:rotate(-90deg) scaleX(0.92);transform-origin:15px 5px;margin-top:-5px">202</div>
<div class="t" style="left:6px;top:5.0px;width:30px;margin-left:-15px;text-align:center;font-size:9.5px;color:#222;transform:rotate(-90deg) scaleX(0.92);transform-origin:15px 5px;margin-top:-5px">204</div>
<div class="t" style="left:6px;top:-19.6px;width:30px;margin-left:-15px;text-align:center;font-size:9.5px;color:#222;transform:rotate(-90deg) scaleX(0.92);transform-origin:15px 5px;margin-top:-5px">206</div>
</div>
<svg class="a" style="left:0;top:0" width="1500" height="844"><path d="M573 160 H583 L578 166 Z M85 464.5 V474.5 L91 469.5 Z" fill="#000"/></svg>
<div class="a" style="left:72px;top:748px;width:1082px;height:2px;background:#c8c8c8"></div>
<div class="a" style="left:72px;top:750px;width:1082px;height:20px;background:#fff;border-bottom:1px solid #c8c8c8"></div>
<div class="t" style="left:77.6px;top:750.6px;font-size:13px;color:#1818d0;"><i>Comando:</i> layeradd</div>
<div class="a" style="left:72px;top:771px;width:1082px;height:27px;background:#ececec"></div>
<div class="t" style="left:73.4px;top:778.1px;font-size:13px;color:#111;">Comando:</div>
<div class="a" style="left:138px;top:776px;width:989px;height:19px;background:#fff"></div>
<div class="a" style="left:72px;top:796px;width:1082px;height:3px;background:linear-gradient(#e4e4e4,#c9c9c9)"></div>
<div class="a" style="left:398.5px;top:735.5px;width:319.5px;height:8.5px;border-radius:4.5px;background:#7e7e7e"></div>
<div class="a" style="left:1143.5px;top:400.5px;width:7px;height:129.5px;border-radius:3.5px;background:#7e7e7e"></div>
<div class="t" style="left:1119.4px;top:734.4px;font-size:13px;color:#111;letter-spacing:-0.3px">1 &lt; 10</div>
<div class="a" style="left:1138px;top:750px;width:16px;height:20px;background:#f4f4f4"></div>
<div class="a" style="left:1142px;top:750px;width:8px;height:17px;border-radius:4px;background:#808080"></div>
<div class="a" style="left:1127px;top:772px;width:26px;height:26px;background:linear-gradient(#ececec,#f6f6f6);border:1px solid #b8b8b8"></div>
<div class="a" style="left:1133px;top:780px;width:14.5px;height:10.5px;background:#e8e8e8;border:1px solid #444;border-top:3px solid #000"></div>
<svg class="a" style="left:0;top:123px" width="72" height="400"><g transform="translate(0,-123)">
<defs><linearGradient id="glb" x1="0" y1="0" x2="0" y2="1"><stop offset="0" stop-color="#e6e6e6"/><stop offset="0.35" stop-color="#f4f4f4"/><stop offset="1" stop-color="#f6f6f6"/></linearGradient></defs>
<rect x="7.0" y="131" width="2" height="2" fill="#a4a4a4"/>
<rect x="13.0" y="131" width="2" height="2" fill="#a4a4a4"/>
<rect x="19.0" y="131" width="2" height="2" fill="#a4a4a4"/>
<rect x="25.0" y="131" width="2" height="2" fill="#a4a4a4"/>
<rect x="31.0" y="131" width="2" height="2" fill="#a4a4a4"/>
<rect x="37.0" y="131" width="2" height="2" fill="#a4a4a4"/>
<rect x="43.0" y="131" width="2" height="2" fill="#a4a4a4"/>
<rect x="49.0" y="131" width="2" height="2" fill="#a4a4a4"/>
<rect x="55.0" y="131" width="2" height="2" fill="#a4a4a4"/>
<rect x="61.0" y="131" width="2" height="2" fill="#a4a4a4"/>
<rect x="1.5" y="137.5" width="34.5" height="34.5" fill="url(#glb)" stroke="#8e8e8e" stroke-width="1.2"/><path d="M32.5 168.5 h-5 l5 -5 Z" fill="#000"/>
<rect x="36.2" y="137.5" width="34.5" height="34.5" fill="url(#glb)" stroke="#8e8e8e" stroke-width="1.2"/><path d="M67.2 168.5 h-5 l5 -5 Z" fill="#000"/>
<rect x="1.5" y="172.2" width="34.5" height="34.5" fill="url(#glb)" stroke="#8e8e8e" stroke-width="1.2"/><path d="M32.5 203.2 h-5 l5 -5 Z" fill="#000"/>
<rect x="36.2" y="172.2" width="34.5" height="34.5" fill="url(#glb)" stroke="#8e8e8e" stroke-width="1.2"/><path d="M67.2 203.2 h-5 l5 -5 Z" fill="#000"/>
<rect x="1.5" y="206.9" width="34.5" height="34.5" fill="url(#glb)" stroke="#8e8e8e" stroke-width="1.2"/><path d="M32.5 237.9 h-5 l5 -5 Z" fill="#000"/>
<rect x="36.2" y="206.9" width="34.5" height="34.5" fill="url(#glb)" stroke="#8e8e8e" stroke-width="1.2"/><path d="M67.2 237.9 h-5 l5 -5 Z" fill="#000"/>
<rect x="1.5" y="241.6" width="34.5" height="34.5" fill="url(#glb)" stroke="#8e8e8e" stroke-width="1.2"/><path d="M32.5 272.6 h-5 l5 -5 Z" fill="#000"/>
<rect x="36.2" y="241.6" width="34.5" height="34.5" fill="url(#glb)" stroke="#8e8e8e" stroke-width="1.2"/><path d="M67.2 272.6 h-5 l5 -5 Z" fill="#000"/>
<rect x="1.5" y="276.8" width="34.5" height="34.5" fill="url(#glb)" stroke="#8e8e8e" stroke-width="1.2"/><path d="M32.5 307.8 h-5 l5 -5 Z" fill="#000"/>
<rect x="1.5" y="320.5" width="34.5" height="34.5" fill="url(#glb)" stroke="#8e8e8e" stroke-width="1.2"/>
<rect x="36.2" y="320.5" width="34.5" height="34.5" fill="url(#glb)" stroke="#8e8e8e" stroke-width="1.2"/><path d="M67.2 351.5 h-5 l5 -5 Z" fill="#000"/>
<rect x="1.5" y="355.2" width="34.5" height="34.5" fill="url(#glb)" stroke="#8e8e8e" stroke-width="1.2"/>
<rect x="1.5" y="398.5" width="34.5" height="34.5" fill="url(#glb)" stroke="#8e8e8e" stroke-width="1.2"/><path d="M32.5 429.5 h-5 l5 -5 Z" fill="#000"/>
<rect x="36.2" y="398.5" width="34.5" height="34.5" fill="url(#glb)" stroke="#8e8e8e" stroke-width="1.2"/>
<rect x="1.5" y="433.2" width="34.5" height="34.5" fill="url(#glb)" stroke="#8e8e8e" stroke-width="1.2"/>
<rect x="36.2" y="433.2" width="34.5" height="34.5" fill="url(#glb)" stroke="#8e8e8e" stroke-width="1.2"/><path d="M67.2 464.2 h-5 l5 -5 Z" fill="#000"/>
<rect x="1.5" y="476.3" width="34.5" height="34.5" fill="url(#glb)" stroke="#8e8e8e" stroke-width="1.2"/><path d="M32.5 507.3 h-5 l5 -5 Z" fill="#000"/>
<path d="M8.2 146.6h7M11.7 143v7M21.7 155.2h7M25.2 151.7v7M8.8 161.6h7M12.3 158v7" stroke="#000" stroke-width="1.2"/>
<path d="M41.6 159.7L65.2 148.8" stroke="#1a1a1a" fill="none" stroke-width="1.2"/>
<path d="M7.5 198.2 A20.5 20.5 0 0 1 28 178" stroke="#1a1a1a" fill="none" stroke-width="1.2"/>
<circle cx="52.5" cy="188.4" r="9.8" stroke="#1a1a1a" fill="none" stroke-width="1.2"/>
<ellipse cx="17.7" cy="223.8" rx="12.8" ry="5.6" transform="rotate(-43 17.7 223.8)" stroke="#1a1a1a" fill="none" stroke-width="1.2"/>
<path d="M42 216 C40 210 48 212 56 222 C62 230 66 226 63.5 215 C61 208 56 212 52 222 C48 232 44 230 42 216 Z" stroke="#1a1a1a" fill="none" stroke-width="1.2"/>
<path d="M13 253.6 A5 5 0 0 0 15 263.2 H28" stroke="#1a1a1a" fill="none" stroke-width="1.2"/>
<path d="M43.3 253 L46.4 247.3 L52.6 247.3 L55.7 253 L52.6 258.7 L46.4 258.7 Z M55.3 260.5 L66.2 260.5 L60.7 251.6 Z" stroke="#1a1a1a" fill="none" stroke-width="1.2"/>
<rect x="41" y="263.7" width="14.6" height="6.8" stroke="#1a1a1a" fill="none" stroke-width="1.2"/>
<defs><pattern id="hat" patternUnits="userSpaceOnUse" width="3" height="3" patternTransform="rotate(-45)"><line x1="0" y1="0" x2="0" y2="3" stroke="#666" stroke-width="0.8"/></pattern></defs>
<path d="M7.5 294.6 L13 287.5 H28.6 V301.4 H7.5 Z" fill="url(#hat)" stroke="#1a1a1a" stroke-width="1.2"/>
<circle cx="20.5" cy="295" r="2.7" fill="#f4f4f4" stroke="#1a1a1a" stroke-width="1"/>
<text x="18.2" y="347.5" text-anchor="middle" font-family="Liberation Serif" font-size="28" fill="#000">A</text>
<path d="M43.4 329.5V345 M61.7 329.5V345 M44 331.8H61" stroke="#1a1a1a" fill="none" stroke-width="1.2"/><path d="M43.8 331.8 l3.5 -2 v4 Z M61.3 331.8 l-3.5 -2 v4 Z" fill="#000"/>
<rect x="7.3" y="363.8" width="21.5" height="16.8" fill="#fff" stroke="#111" stroke-width="1.8"/>
<path d="M9.5 378.5 L14 372 L17 375 L20.5 370 L26.5 378.5 Z" fill="#000"/><circle cx="24.5" cy="367.6" r="1.5" fill="#000"/>
<path d="M5 408.7 V427.3 H24.5 Z" fill="#fff" stroke="#111" stroke-width="1.4"/><path d="M8.5 419 V424 H13.5 Z" fill="none" stroke="#111" stroke-width="1"/>
<path d="M10 404 L18 412 L20.5 409.5 L12.5 401.5 Z" fill="#e02020" stroke="#701010" stroke-width="0.6"/>
<path d="M27.2 402.5 L24 421 M27.2 402.5 L30 421" stroke="#111" stroke-width="1.1" fill="none"/>
<rect x="41" y="410.8" width="24" height="8.6" rx="1.5" fill="#fff" stroke="#333" stroke-width="1"/>
<path d="M44 411 v3 M47 411 v2 M50 411 v3 M53 411 v2 M56 411 v3 M59 411 v2 M62 411 v3" stroke="#444" stroke-width="0.7"/>
<rect x="7.4" y="440.3" width="17" height="13.4" fill="#f2eed8" stroke="#999" stroke-width="1"/>
<circle cx="21.9" cy="451.8" r="7" fill="#ebe6c8" fill-opacity="0.8" stroke="#999" stroke-width="1"/>
<circle cx="7.4" cy="452.7" r="1.3" fill="#f06060"/>
<line x1="41.5" y1="448.8" x2="58.7" y2="439" stroke="#e02020" stroke-width="1.2"/>
<path d="M51.3 444 L51.3 457 L54 454.5 L56.3 459.5 L58 458.7 L55.8 454 L59.5 454 Z" fill="#fff" stroke="#555" stroke-width="0.9" stroke-linejoin="round"/>
<path d="M7 488 L18 483.5 L29 488 V499.5 L18 504 L7 499.5 Z M7 488 L18 492.5 L29 488 M18 492.5 V504" stroke="#111" stroke-width="1.2" fill="none" stroke-linejoin="round"/>
</g></svg>
<svg class="a" style="left:0;top:0" width="1500" height="844">
<defs><linearGradient id="gtb" x1="0" y1="0" x2="0" y2="1"><stop offset="0" stop-color="#f4f4f4"/><stop offset="1" stop-color="#e4e4e4"/></linearGradient><linearGradient id="gcb" x1="0" y1="0" x2="0" y2="1"><stop offset="0" stop-color="#3c96ff"/><stop offset="1" stop-color="#0b6cf0"/></linearGradient></defs>
<circle cx="1163.8" cy="133.0" r="7" fill="#6a6a6a"/><path d="M1160.8 130.0 l6 6 M1166.8 130.0 l-6 6" stroke="#fff" stroke-width="1.8"/><circle cx="1182" cy="133.0" r="7" fill="#6a6a6a"/><rect x="1178" y="132.5" width="6" height="4.5" fill="none" stroke="#fff" stroke-width="1.2"/><path d="M1180 131.5 v-2 h6 v4.5 h-2" fill="none" stroke="#fff" stroke-width="1.2"/>
<text x="1322" y="137.5" text-anchor="middle" font-family="Liberation Sans" font-size="12" fill="#2a2a2a">Elenco dei livelli</text>
<rect x="1155.5" y="145" width="298" height="25.5" fill="url(#gtb)" stroke="#a8a8a8" stroke-width="1"/>
<line x1="1214.7" y1="145" x2="1214.7" y2="170.5" stroke="#a8a8a8" stroke-width="1.2"/>
<line x1="1274.9" y1="145" x2="1274.9" y2="170.5" stroke="#a8a8a8" stroke-width="1.2"/>
<line x1="1335.0" y1="145" x2="1335.0" y2="170.5" stroke="#a8a8a8" stroke-width="1.2"/>
<line x1="1395.0" y1="145" x2="1395.0" y2="170.5" stroke="#a8a8a8" stroke-width="1.2"/>
<path d="M1176.9 157.4 Q1184.9 148.4 1192.9 157.4 Q1184.9 166.4 1176.9 157.4 Z" fill="#000"/><ellipse cx="1184.9" cy="157.7" rx="4.2" ry="3.3" fill="#fff"/><circle cx="1184.9" cy="157.7" r="2" fill="#000"/>
<path d="M1236.8 157.4 Q1244.8 148.4 1252.8 157.4 Q1244.8 166.4 1236.8 157.4 Z" fill="#a4a4a4"/><ellipse cx="1244.8" cy="157.7" rx="4.2" ry="3.3" fill="#f0f0f0"/><circle cx="1244.8" cy="157.7" r="2" fill="#a4a4a4"/>
<path d="M1304.6 151 V164 M1298.1 157.5 H1311.1" stroke="#e01010" stroke-width="3.2"/>
<path d="M1358 157.5 H1371" stroke="#e01010" stroke-width="3.2"/>
<g transform="translate(1418.0 166.0) scale(0.75)"><path d="M0 0 L2 -5 L16 -19 L19 -16 L5 -2 Z" fill="#e8a838" stroke="#8a5a18" stroke-width="0.6"/><path d="M16 -19 L17.5 -20.5 L20.5 -17.5 L19 -16 Z" fill="#e02828"/><path d="M0 0 L1 -3 L3 -1 Z" fill="#333"/></g>
<rect x="1155.5" y="171" width="299" height="387" fill="#fff" stroke="#c4c4c4" stroke-width="1"/>
<rect x="1156" y="192" width="298" height="19.5" fill="#0a4fd6"/>
<rect x="1181.7" y="178.7" width="15" height="7.5" fill="#fff" stroke="#000" stroke-width="1"/>
<rect x="1181.2" y="198.2" width="15.5" height="8.7" fill="#3a4453"/>
<rect x="1181.2" y="218" width="15.5" height="8.6" fill="#000"/>
<text x="1203" y="186.3" font-family="Liberation Sans" font-size="13" fill="#000">0</text>
<text x="1203" y="206.5" font-family="Liberation Sans" font-size="13" letter-spacing="0.2" fill="#fff">Numeri catastali</text>
<text x="1203" y="226.4" font-family="Liberation Sans" font-size="13" letter-spacing="0.2" fill="#000">Testo</text>
<path d="M1414.7 181.7 Q1422.7 172.7 1430.7 181.7 Q1422.7 190.7 1414.7 181.7 Z" fill="#000"/><ellipse cx="1422.7" cy="182.0" rx="4.2" ry="3.3" fill="#fff"/><circle cx="1422.7" cy="182.0" r="2" fill="#000"/>
<path d="M1441.4 181.7 v-2.5 a3.6 3.6 0 0 1 7.2 0 v2.5" stroke="#b8b8b8" stroke-width="2" fill="none"/><rect x="1440.0" y="181.7" width="10" height="7.5" rx="0.5" fill="#b8b8b8"/>
<path d="M1414.7 201.9 Q1422.7 192.9 1430.7 201.9 Q1422.7 210.9 1414.7 201.9 Z" fill="#000"/><ellipse cx="1422.7" cy="202.2" rx="4.2" ry="3.3" fill="#0a4fd6"/><circle cx="1422.7" cy="202.2" r="2" fill="#000"/>
<path d="M1441.4 201.9 v-2.5 a3.6 3.6 0 0 1 7.2 0 v2.5" stroke="#b8b8b8" stroke-width="2" fill="none"/><rect x="1440.0" y="201.9" width="10" height="7.5" rx="0.5" fill="#b8b8b8"/>
<path d="M1414.7 222.0 Q1422.7 213.0 1430.7 222.0 Q1422.7 231.0 1414.7 222.0 Z" fill="#000"/><ellipse cx="1422.7" cy="222.3" rx="4.2" ry="3.3" fill="#fff"/><circle cx="1422.7" cy="222.3" r="2" fill="#000"/>
<path d="M1441.4 222.0 v-2.5 a3.6 3.6 0 0 1 7.2 0 v2.5" stroke="#b8b8b8" stroke-width="2" fill="none"/><rect x="1440.0" y="222.0" width="10" height="7.5" rx="0.5" fill="#b8b8b8"/>
<g transform="translate(1397.0 209.0) scale(0.60)"><path d="M0 0 L2 -5 L16 -19 L19 -16 L5 -2 Z" fill="#e8a838" stroke="#8a5a18" stroke-width="0.6"/><path d="M16 -19 L17.5 -20.5 L20.5 -17.5 L19 -16 Z" fill="#e02828"/><path d="M0 0 L1 -3 L3 -1 Z" fill="#333"/></g>
<circle cx="1163.8" cy="569.0" r="7" fill="#6a6a6a"/><path d="M1160.8 566.0 l6 6 M1166.8 566.0 l-6 6" stroke="#fff" stroke-width="1.8"/><circle cx="1182" cy="569.0" r="7" fill="#6a6a6a"/><rect x="1178" y="568.5" width="6" height="4.5" fill="none" stroke="#fff" stroke-width="1.2"/><path d="M1180 567.5 v-2 h6 v4.5 h-2" fill="none" stroke="#fff" stroke-width="1.2"/>
<text x="1322" y="574" text-anchor="middle" font-family="Liberation Sans" font-size="12" fill="#2a2a2a">Filtro di selezione</text>
<line x1="1155" y1="580" x2="1454" y2="580" stroke="#c8c8c8" stroke-width="1.5"/>
<rect x="1167" y="594.5" width="276" height="135.5" fill="#e4e4e4"/>
<line x1="1167" y1="594.5" x2="1443" y2="594.5" stroke="#d8d8d8"/>
<text x="1174.4" y="595.5" font-family="Liberation Sans" font-size="11.5" fill="#111">Filtro</text>
<text x="1182" y="629.8" font-family="Liberation Sans" font-size="13" letter-spacing="0.35" fill="#111">Tipo oggetto:</text>
<rect x="1271.5" y="615.0" width="155.5" height="20.5" rx="5" fill="#fff" stroke="#cfcfcf" stroke-width="0.8"/>
<rect x="1409" y="617.2" width="16" height="16" rx="4" fill="url(#gcb)"/>
<path d="M1414 623.5 l3 -3 l3 3 M1414 626.8 l3 3 l3 -3" stroke="#fff" stroke-width="1.2" fill="none"/>
<text x="1275" y="630.0" font-family="Liberation Sans" font-size="13" letter-spacing="0.3" fill="#111">Testo</text>
<text x="1182" y="655.6" font-family="Liberation Sans" font-size="13" letter-spacing="0.35" fill="#111">Proprietà:</text>
<rect x="1271.5" y="640.8" width="155.5" height="20.5" rx="5" fill="#fff" stroke="#cfcfcf" stroke-width="0.8"/>
<rect x="1409" y="643.0" width="16" height="16" rx="4" fill="url(#gcb)"/>
<path d="M1414 649.3 l3 -3 l3 3 M1414 652.6 l3 3 l3 -3" stroke="#fff" stroke-width="1.2" fill="none"/>
<text x="1275" y="655.8" font-family="Liberation Sans" font-size="13" letter-spacing="0.3" fill="#111">Colore</text>
<text x="1182" y="681.4" font-family="Liberation Sans" font-size="13" letter-spacing="0.35" fill="#111">Confronto:</text>
<rect x="1271.5" y="666.6" width="155.5" height="20.5" rx="5" fill="#fff" stroke="#cfcfcf" stroke-width="0.8"/>
<rect x="1409" y="668.8" width="16" height="16" rx="4" fill="url(#gcb)"/>
<path d="M1414 675.1 l3 -3 l3 3 M1414 678.4 l3 3 l3 -3" stroke="#fff" stroke-width="1.2" fill="none"/>
<text x="1275" y="681.6" font-family="Liberation Sans" font-size="13" letter-spacing="0.3" fill="#111">= (è)</text>
<text x="1182" y="707.2" font-family="Liberation Sans" font-size="13" letter-spacing="0.35" fill="#111">Valore:</text>
<rect x="1271.5" y="692.4" width="155.5" height="20.5" rx="5" fill="#fff" stroke="#cfcfcf" stroke-width="0.8"/>
<rect x="1409" y="694.6" width="16" height="16" rx="4" fill="url(#gcb)"/>
<path d="M1414 700.9 l3 -3 l3 3 M1414 704.2 l3 3 l3 -3" stroke="#fff" stroke-width="1.2" fill="none"/>
<rect x="1275.5" y="698.4" width="15.5" height="9.5" fill="#ffff00" stroke="#000" stroke-width="1"/>
<text x="1297" y="707.4" font-family="Liberation Sans" font-size="13" letter-spacing="0.3" fill="#111">Giallo</text>
<rect x="1167.5" y="745.5" width="275" height="25" fill="url(#gtb)" stroke="#a8a8a8" stroke-width="1"/>
<line x1="1236.0" y1="745.5" x2="1236.0" y2="770.5" stroke="#a8a8a8" stroke-width="1.2"/>
<line x1="1304.7" y1="745.5" x2="1304.7" y2="770.5" stroke="#a8a8a8" stroke-width="1.2"/>
<line x1="1374.0" y1="745.5" x2="1374.0" y2="770.5" stroke="#a8a8a8" stroke-width="1.2"/>
<rect x="1194.5" y="751" width="12.5" height="12.5" fill="#f4a0a0" stroke="#c04040" stroke-width="0.8" stroke-dasharray="1 1"/>
<rect x="1263.5" y="751" width="10" height="10" fill="#f4a0a0" stroke="#a05050" stroke-width="0.8"/><rect x="1266.5" y="754" width="10" height="10" fill="#f4a0a0" stroke="#804040" stroke-width="0.8" stroke-dasharray="1 1"/>
<rect x="1332.5" y="751" width="10" height="10" fill="#f4a0a0" stroke="#a05050" stroke-width="0.8"/><rect x="1336" y="754.5" width="9.5" height="9.5" fill="#fff" stroke="#555" stroke-width="0.8" stroke-dasharray="1 1"/><rect x="1336" y="754.5" width="6.5" height="6.5" fill="#fff"/>
<rect x="1401.5" y="751" width="10" height="10" fill="#fff" stroke="#555" stroke-width="0.8"/><rect x="1405" y="754.5" width="9.5" height="9.5" fill="none" stroke="#555" stroke-width="0.8" stroke-dasharray="1 1"/><rect x="1405" y="754.5" width="6.5" height="6.5" fill="#f4a0a0"/>
<rect x="1462.5" y="131" width="2" height="2" fill="#a4a4a4"/>
<rect x="1468.5" y="131" width="2" height="2" fill="#a4a4a4"/>
<rect x="1474.5" y="131" width="2" height="2" fill="#a4a4a4"/>
<rect x="1480.5" y="131" width="2" height="2" fill="#a4a4a4"/>
<rect x="1486.5" y="131" width="2" height="2" fill="#a4a4a4"/>
<rect x="1456.5" y="135" width="42" height="42.5" rx="6" fill="#b6b6b6"/>
<rect x="1456.5" y="331" width="42" height="42.5" rx="6" fill="#b6b6b6"/>
<rect x="1456.5" y="433" width="42" height="42.5" rx="6" fill="#b6b6b6"/>
<rect x="1463.8" y="142.3" width="27" height="27.5" fill="#fff" stroke="#333" stroke-width="0.8"/><rect x="1463.8" y="142.3" width="27" height="4.2" fill="#000"/><rect x="1465" y="143.1" width="3" height="2.6" fill="#fff"/>
<rect x="1463.8" y="189.5" width="27" height="27.5" fill="#fff" stroke="#333" stroke-width="0.8"/><rect x="1463.8" y="189.5" width="27" height="4.2" fill="#000"/><rect x="1465" y="190.3" width="3" height="2.6" fill="#fff"/>
<rect x="1463.8" y="236.0" width="27" height="27.5" fill="#fff" stroke="#333" stroke-width="0.8"/><rect x="1463.8" y="236.0" width="27" height="4.2" fill="#000"/><rect x="1465" y="236.8" width="3" height="2.6" fill="#fff"/>
<rect x="1463.8" y="290.3" width="27" height="27.5" fill="#fff" stroke="#333" stroke-width="0.8"/><rect x="1463.8" y="290.3" width="27" height="4.2" fill="#000"/><rect x="1465" y="291.1" width="3" height="2.6" fill="#fff"/>
<rect x="1463.8" y="337.8" width="27" height="27.5" fill="#fff" stroke="#333" stroke-width="0.8"/><rect x="1463.8" y="337.8" width="27" height="4.2" fill="#000"/><rect x="1465" y="338.6" width="3" height="2.6" fill="#fff"/>
<rect x="1463.8" y="385.0" width="27" height="27.5" fill="#fff" stroke="#333" stroke-width="0.8"/><rect x="1463.8" y="385.0" width="27" height="4.2" fill="#000"/><rect x="1465" y="385.8" width="3" height="2.6" fill="#fff"/>
<rect x="1463.8" y="440.0" width="27" height="27.5" fill="#fff" stroke="#333" stroke-width="0.8"/><rect x="1463.8" y="440.0" width="27" height="4.2" fill="#000"/><rect x="1465" y="440.8" width="3" height="2.6" fill="#fff"/>
<rect x="1463.8" y="487.5" width="27" height="27.5" fill="#fff" stroke="#333" stroke-width="0.8"/><rect x="1463.8" y="487.5" width="27" height="4.2" fill="#000"/><rect x="1465" y="488.3" width="3" height="2.6" fill="#fff"/>
<path d="M1471 154.3 l8 -3 v12 l-8 3 Z" fill="#aaa" stroke="#666" stroke-width="0.6"/><path d="M1474 153.3 l9 -3 v12 l-9 3 Z" fill="#fff" stroke="#666" stroke-width="0.6"/><path d="M1476 162.3 l5 -6 v5" stroke="#e03030" stroke-width="0.8" fill="none"/>
<rect x="1470" y="198.5" width="10" height="8" fill="#f2eed8" stroke="#888" stroke-width="0.7"/><circle cx="1479" cy="206.5" r="4.2" fill="#ebe6c8" stroke="#888" stroke-width="0.7"/>
<rect x="1468" y="245.0" width="18" height="12" rx="2" fill="#f4f6fa" stroke="#b8c4d8" stroke-width="0.8"/>
<rect x="1467" y="298.3" width="3.5" height="3" fill="#000"/><rect x="1473" y="298.3" width="14" height="3" fill="#fff" stroke="#333" stroke-width="0.6"/>
<rect x="1467" y="303.8" width="3.5" height="3" fill="#000"/><rect x="1473" y="303.8" width="14" height="3" fill="#fff" stroke="#333" stroke-width="0.6"/>
<rect x="1467" y="309.3" width="3.5" height="3" fill="#000"/><rect x="1473" y="309.3" width="14" height="3" fill="#fff" stroke="#333" stroke-width="0.6"/>
<path d="M1469 346.8 h17 l-6 7 v8 l-5 -3 v-5 Z" fill="#888" stroke="#555" stroke-width="0.6"/>
<path d="M1470 393.0 l8 4 h6 v8 h-6 l-8 4 Z" fill="#fff" stroke="#444" stroke-width="0.8"/><rect x="1478" y="396.0" width="7" height="7" fill="#777"/><line x1="1467" y1="399.5" x2="1489" y2="399.5" stroke="#e06060" stroke-width="0.6" stroke-dasharray="1 1"/>
<line x1="1466" y1="448.0" x2="1482.0" y2="448.0" stroke="#999" stroke-width="0.6"/>
<line x1="1466" y1="451.2" x2="1480.0" y2="451.2" stroke="#999" stroke-width="0.6"/>
<line x1="1466" y1="454.4" x2="1482.0" y2="454.4" stroke="#999" stroke-width="0.6"/>
<line x1="1466" y1="457.6" x2="1480.0" y2="457.6" stroke="#999" stroke-width="0.6"/>
<line x1="1466" y1="460.8" x2="1482.0" y2="460.8" stroke="#999" stroke-width="0.6"/>
<line x1="1464" y1="464.0" x2="1490" y2="464.0" stroke="#333" stroke-width="0.6"/>
<rect x="1470" y="496.5" width="14" height="15" rx="1" fill="#c48a2c"/><rect x="1472" y="498.5" width="10" height="11.5" fill="#f4f4f4"/><rect x="1474" y="495.5" width="6" height="3" fill="#888"/>
<path d="M1458 276.0 H1498 M1458 425.5 H1498 M1458 528.5 H1498" stroke="#6a6a6a" stroke-width="1" stroke-dasharray="1.2 2.4"/>
<g transform="translate(1464.5 566.5) scale(0.185) translate(0 -100)" fill="none" stroke="#151515" stroke-width="9.5" stroke-linejoin="round"><path d="M4.5 4.5 H36.5 A23 23 0 0 1 59.5 27.5 V36 A14 14 0 0 1 45.5 50 H18 M45.5 50 A14 14 0 0 1 59.5 64 V72.5 A23 23 0 0 1 36.5 95.5 H4.5"/><path d="M78 4.5 H110 A23 23 0 0 1 133 27.5 V72.5 A23 23 0 0 1 110 95.5 H78 Z"/></g>
</svg>
<div class="t" style="left:2.0px;top:806.9px;font-size:9.5px;color:#1a1a1a;letter-spacing:0.3px;-webkit-text-stroke:0.2px #1a1a1a">235.9188,180.0135</div>
<div class="t" style="left:2.0px;top:827.4px;font-size:9.5px;color:#1a1a1a;letter-spacing:0.3px;-webkit-text-stroke:0.2px #1a1a1a">@235.9188,180.0135</div>
<div class="a" style="left:253px;top:802px;width:1px;height:40px;background:#8a8a8a;box-shadow:1px 0 0 #f0f0f0"></div>
<div class="t" style="left:256.0px;top:806.9px;font-size:9.5px;color:#1a1a1a;letter-spacing:0.45px;-webkit-text-stroke:0.2px #1a1a1a">296.7533&lt;37°</div>
<div class="t" style="left:256.0px;top:827.4px;font-size:9.5px;color:#1a1a1a;letter-spacing:0.45px;-webkit-text-stroke:0.2px #1a1a1a">@296.7533&lt;37°</div>
<div class="a" style="left:506px;top:819px;width:6px;height:6px;border-radius:3px;background:#c4c4c4"></div>
<div class="t" style="left:572.0px;top:817.3px;font-size:9.6px;color:#1a1a1a;letter-spacing:0.26px;-webkit-text-stroke:0.2px #1a1a1a">Selezionare entità o regione</div>
<svg class="a" style="left:714px;top:804px" width="24" height="34"><path d="M12 2.5 C6 2.5 3.5 7 3.5 13 V23 C3.5 28.5 7 31.5 12 31.5 C17 31.5 20.5 28.5 20.5 23 V13 C20.5 7 18 2.5 12 2.5 Z" fill="#fff" stroke="#333" stroke-width="1"/><path d="M3.5 15 Q12 12.5 20.5 15 M12 2.5 V14" stroke="#333" stroke-width="1" fill="none"/><rect x="10.3" y="5.5" width="3.4" height="6.5" rx="1.7" fill="#fff" stroke="#333" stroke-width="0.9"/></svg>
<div class="a" style="left:940px;top:819px;width:6px;height:6px;border-radius:3px;background:#c4c4c4"></div>
<div class="t" style="left:949.0px;top:817.3px;font-size:9.6px;color:#1a1a1a;letter-spacing:0.28px;-webkit-text-stroke:0.2px #1a1a1a">Nessun entità selezionate.</div>
<div class="a" style="left:1269px;top:819px;width:6px;height:6px;border-radius:3px;background:#c4c4c4"></div>
</body></html>
